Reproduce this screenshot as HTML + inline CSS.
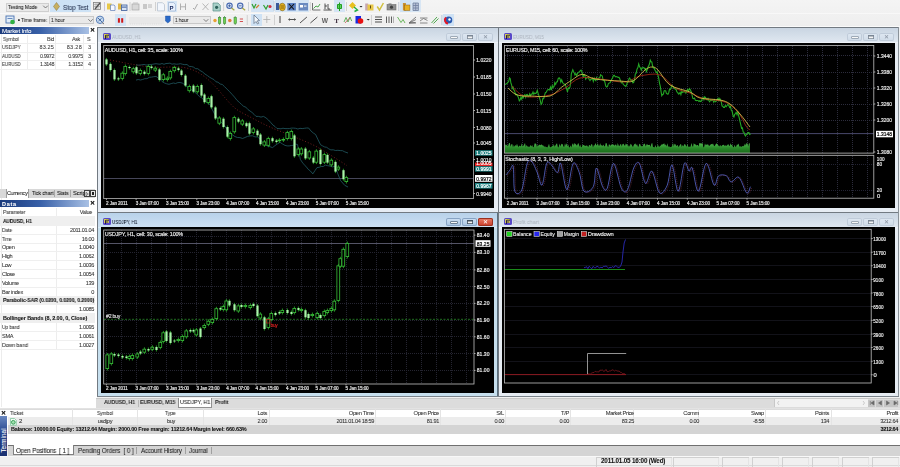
<!DOCTYPE html><html><head><meta charset="utf-8"><style>
html,body{margin:0;padding:0;width:900px;height:467px;overflow:hidden;background:#f0f0f0;font-family:"Liberation Sans", sans-serif;}
.t{position:absolute;white-space:nowrap;color:#303030;-webkit-text-stroke:0.06px currentColor;will-change:transform;}
svg{position:absolute;will-change:transform;}
</style></head><body>
<div style="position:absolute;left:0px;top:0px;width:900px;height:27px;background:linear-gradient(#f4f4f4,#eeeeee);"></div>
<div style="position:absolute;left:0px;top:25.5px;width:900px;height:1px;background:#fafafa;"></div>
<div style="position:absolute;left:0px;top:13px;width:900px;height:1px;background:#f8f8f8;"></div>
<div style="position:absolute;left:6px;top:2.5px;width:43px;height:9px;background:#e9e9e9;box-shadow:inset 0 0 0 1px #cfcfcf;"></div>
<div style="position:absolute;left:50px;top:0px;width:41px;height:12px;background:#cde2f5;"></div>
<div style="position:absolute;left:166.5px;top:1px;width:10px;height:11px;background:#d6e6f6;"></div>
<div style="position:absolute;left:250.5px;top:0px;width:23.5px;height:12px;background:#d4e4f4;"></div>
<div style="position:absolute;left:274.5px;top:0px;width:34px;height:12px;background:#d4e4f4;"></div>
<div style="position:absolute;left:334px;top:0px;width:11px;height:12px;background:#d4e4f4;"></div>
<div style="position:absolute;left:400px;top:0px;width:11px;height:12px;background:#cfe2f4;"></div>
<div style="position:absolute;left:411px;top:0px;width:9.5px;height:12px;background:#d8e6f4;"></div>
<div style="position:absolute;left:49.4px;top:15.6px;width:45px;height:8.6px;background:#e9e9e9;box-shadow:inset 0 0 0 1px #c8c8c8;"></div>
<div style="position:absolute;left:115px;top:14px;width:11px;height:12px;background:#d4e4f4;"></div>
<div style="position:absolute;left:128.6px;top:16.5px;width:35.5px;height:7.5px;background:#e8e8e8;"></div>
<div style="position:absolute;left:173.4px;top:15.6px;width:38px;height:8.6px;background:#e9e9e9;box-shadow:inset 0 0 0 1px #c8c8c8;"></div>
<div style="position:absolute;left:250.5px;top:14px;width:11px;height:12px;background:#cfe2f4;"></div>
<div style="position:absolute;left:443px;top:14px;width:11px;height:12px;background:#cfe2f4;"></div>
<div class="t" style="left:7.50px;top:3.60px;font-size:5.7px;line-height:6.84px;letter-spacing:-0.1px;transform:scaleX(0.896);transform-origin:0 0;color:#202020;">Testing Mode</div>
<div class="t" style="left:62.60px;top:4.16px;font-size:6.8px;line-height:8.16px;letter-spacing:-0.1px;transform:scaleX(0.926);transform-origin:0 0;color:#1e2a48;">Stop Test</div>
<div class="t" style="left:21.30px;top:16.50px;font-size:5.7px;line-height:6.84px;letter-spacing:-0.1px;transform:scaleX(0.904);transform-origin:0 0;color:#202020;">Time frame:</div>
<div class="t" style="left:51.40px;top:16.90px;font-size:5.7px;line-height:6.84px;letter-spacing:-0.1px;transform:scaleX(0.875);transform-origin:0 0;color:#202020;">1 hour</div>
<div class="t" style="left:175.40px;top:16.90px;font-size:5.7px;line-height:6.84px;letter-spacing:-0.1px;transform:scaleX(0.849);transform-origin:0 0;color:#202020;">1 hour</div>
<svg style="left:0;top:0" width="460" height="27" viewBox="0 0 460 27">
<g fill="none" stroke-linecap="round">
<path d="M43.5 6 L45.5 8 L47.5 6" stroke="#606060" stroke-width="0.8"/>
<path d="M88.6 19.5 L90.6 21.5 L92.6 19.5" stroke="#606060" stroke-width="0.8"/>
<path d="M204 19.5 L206 21.5 L208 19.5" stroke="#606060" stroke-width="0.8"/>
</g>
<path d="M56.5 2.5 L59.5 6.5 L56.5 10.5 L53.5 6.5Z" fill="#c8b060" stroke="#807040" stroke-width="0.5"/>
<rect x="93.5" y="2.5" width="7" height="7" fill="#e8e8e8" stroke="#808080" stroke-width="0.8"/>
<path d="M94 4.5 H100 M94 6.5 H100 M96 3 V9 M98 3 V9" stroke="#909090" stroke-width="0.5"/>
<path d="M95 9 L100 3" stroke="#505050" stroke-width="1.2"/>
<rect x="104" y="2" width="0.8" height="9" fill="#c0b8d0"/>
<rect x="107" y="3.5" width="4.5" height="6" fill="#e8c848"/>
<path d="M110.5 5 H114 L115 6 V10.5 H110.5Z" fill="#f8f8ff" stroke="#6080b8" stroke-width="0.7"/>
<rect x="118" y="3.5" width="3.5" height="6" fill="#e0b848"/>
<rect x="121.5" y="5" width="5.5" height="5.5" fill="#d8e4f4" stroke="#3a5a98" stroke-width="0.8"/>
<rect x="122" y="6.6" width="4.5" height="1" fill="#3a5a98"/>
<rect x="129.6" y="2" width="0.8" height="9" fill="#c8c8c8"/>
<rect x="132" y="4" width="7" height="6" fill="#d8d8d8" stroke="#a8a8a8" stroke-width="0.7"/>
<path d="M133 3 H138" stroke="#b0b0b0" stroke-width="0.7"/>
<rect x="143" y="4" width="4" height="5" fill="#c8c8c8"/><path d="M148 5 H152 M148 7 H152" stroke="#a8a8a8" stroke-width="0.8"/>
<rect x="155" y="2" width="0.8" height="9" fill="#c8c8c8"/>
<path d="M157.5 2.7 H162.5 L164.5 4.7 V10.9 H157.5Z" fill="#f2f6fc" stroke="#b0bccc" stroke-width="0.7"/>
<path d="M168.5 2.5 H173.5 L175.5 4.5 V11 H168.5Z" fill="#e8f0fc" stroke="#90a8c8" stroke-width="0.6"/>
<text x="169.6" y="9.6" font-size="6" font-weight="bold" fill="#1a2a60" font-family="Liberation Sans">P</text>
<path d="M180.5 3.5 V10 M185.5 3.5 V10 M180.5 6.8 H185.5" stroke="#a8a8a8" stroke-width="0.9"/>
<path d="M193 8 L194.5 9.5 L197.5 4" stroke="#a0a0a0" stroke-width="0.9" fill="none"/>
<path d="M202.5 3.5 L208.5 10 M208.5 3.5 L202.5 10" stroke="#a8a8a8" stroke-width="0.8"/>
<path d="M213 3 H218 L220.3 5.3 V11 H213Z" fill="#a8d0c8" stroke="#5a9088" stroke-width="0.7"/>
<circle cx="216.6" cy="7.3" r="1.6" fill="#2a6058"/>
<rect x="223.3" y="2" width="0.8" height="9" fill="#c8c8c8"/>
<circle cx="229.5" cy="5.8" r="2.7" fill="#dce8f8" stroke="#4a6ab0" stroke-width="1.1"/>
<path d="M228 5.8 H231 M229.5 4.3 V7.3" stroke="#2a4a90" stroke-width="0.7"/>
<path d="M231.5 8 L234.4 10.3" stroke="#a8a840" stroke-width="1.2"/>
<circle cx="240.2" cy="5.8" r="2.7" fill="#dce8f8" stroke="#4a6ab0" stroke-width="1.1"/>
<path d="M238.7 5.8 H241.7" stroke="#2a4a90" stroke-width="0.7"/>
<path d="M242.2 8 L245.2 10.3" stroke="#a8a840" stroke-width="1.2"/>
<rect x="248.2" y="2" width="0.8" height="9" fill="#c0c8d0"/>
<path d="M252 4 L254 8 L256 4" stroke="#30a030" stroke-width="1.2" fill="none"/><path d="M256 8 L259 5" stroke="#d08030" stroke-width="1.2"/>
<path d="M263.5 5 L266 9 L268 5" stroke="#30a030" stroke-width="1.2" fill="none"/><circle cx="270" cy="6.5" r="1.6" fill="#d03040"/>
<rect x="273.6" y="1" width="0.8" height="10" fill="#b8c8d8"/>
<rect x="276" y="3" width="3" height="7" fill="#3a5a9a"/>
<ellipse cx="282.3" cy="7" rx="3" ry="3.8" fill="#e0b020" stroke="#806010" stroke-width="0.6"/>
<path d="M280.5 6 H284 M280.5 8 H284" stroke="#604000" stroke-width="0.6"/>
<rect x="287.3" y="3" width="8.6" height="7.5" fill="#5a80c0"/>
<path d="M289 4 L294 9.5 M294 4 L289 9.5" stroke="#101010" stroke-width="1.1"/>
<rect x="298.6" y="3" width="9.4" height="7.5" fill="#6a8ac0"/>
<rect x="300" y="5" width="3" height="2.5" fill="#ffffff"/><rect x="304" y="5.5" width="2.5" height="1.2" fill="#e8e8e8"/>
<rect x="309.8" y="2" width="0.8" height="9" fill="#c8c8c8"/>
<path d="M312.5 3 V10 H320.4" stroke="#505050" stroke-width="0.8" fill="none"/><path d="M313.5 8.5 L316 6 L318 7 L320 4" stroke="#40a040" stroke-width="0.9" fill="none"/>
<path d="M323.5 10 H331.7 M325 3.5 V9 M325 6 H327 M328 4 V9 H330" stroke="#404040" stroke-width="0.9" fill="none"/>
<path d="M339.5 2.5 V11 M337.5 4.5 H341.5 V8.5 H337.5Z" stroke="#20a020" stroke-width="1" fill="#60d060"/>
<rect x="346" y="2" width="0.8" height="9" fill="#c8c8c8"/>
<path d="M352.5 2 L356 5.5 L352.5 9 L349 5.5Z" fill="#e8c020"/><path d="M354 7 L357.5 10 L354.5 11.5" stroke="#20b040" stroke-width="1.4" fill="none"/>
<path d="M359.5 6 H362.5 L361 7.5Z" fill="#202020"/>
<rect x="365.2" y="3.5" width="3" height="7" fill="#c8a8b0"/><rect x="367.5" y="4.5" width="6" height="6" fill="#e8c848"/><rect x="370" y="5.5" width="0.9" height="3" fill="#504010"/>
<path d="M377.2 6.5 L379.5 10 L383.4 3" stroke="#d0c040" stroke-width="1.5" fill="none"/>
<rect x="387" y="4.5" width="9" height="5.5" fill="#909090" stroke="#606060" stroke-width="0.5"/><circle cx="391.5" cy="7.2" r="1.6" fill="#404040"/><rect x="388.5" y="3.5" width="3" height="1" fill="#707070"/>
<rect x="398.4" y="2" width="0.8" height="9" fill="#b8c0d0"/>
<rect x="402.9" y="3" width="3" height="7.5" fill="#c89030"/><rect x="404.5" y="5" width="5.4" height="5.5" fill="#e8b020" stroke="#906010" stroke-width="0.5"/>
<path d="M413 3 H418.4 V10.5 H413Z M413 5.5 H418.4 M413 8 H418.4 M415.7 3 V10.5" stroke="#7080a0" stroke-width="0.8" fill="#b8c4d8"/>
<!-- row 2 -->
<rect x="6" y="16" width="8" height="7" fill="#e0ecf8" stroke="#4a72b0" stroke-width="0.9"/>
<path d="M7.5 18.5 H12.5" stroke="#4a72b0" stroke-width="0.8"/>
<circle cx="12.5" cy="22" r="2.3" fill="#30b040"/>
<rect x="18" y="19.3" width="1.8" height="1.6" fill="#202020"/>
<circle cx="100" cy="19.8" r="3.7" fill="#c8dcf0" stroke="#4a72b0" stroke-width="0.9"/>
<path d="M98 18 L102 22 M98.5 21 L101.5 18.5" stroke="#2a5090" stroke-width="0.8"/>
<path d="M102 22.5 L104 24" stroke="#707070" stroke-width="1"/>
<rect x="117.9" y="18.2" width="2" height="4.5" fill="#d01818"/><rect x="121.2" y="18.2" width="2" height="4.5" fill="#d01818"/>
<path d="M130 24 H163" stroke="#c8c8c8" stroke-width="0.6" stroke-dasharray="0.6 1.6"/>
<path d="M165.4 16 H170.3 V21 L167.85 23 L165.4 21Z" fill="#2a6ac8" stroke="#1a4a98" stroke-width="0.4"/>
<circle cx="215" cy="20.5" r="1.7" fill="#e8a030"/>
<path d="M219.5 16 V25 M224.5 16 V25 M235.2 16 V25" stroke="#308030" stroke-width="0.6"/>
<rect x="218.3" y="17.5" width="2.5" height="6" fill="#70d050" stroke="#308030" stroke-width="0.5"/>
<rect x="223.3" y="17.5" width="2.5" height="6" fill="#70d050" stroke="#308030" stroke-width="0.5"/>
<circle cx="229.8" cy="20.5" r="1.8" fill="#e08040"/>
<rect x="234" y="17.5" width="2.5" height="6" fill="#70d050" stroke="#308030" stroke-width="0.5"/>
<path d="M239.8 19 H243 M239.8 21.5 H243" stroke="#d04040" stroke-width="0.9"/>
<rect x="246.8" y="15" width="0.8" height="10" fill="#c8c8c8"/>
<path d="M254 15 V23.5 L256 21.5 L257.5 24 L258.7 23.3 L257.3 20.8 L259.5 20.5Z" fill="#f4f8fc" stroke="#5a6a80" stroke-width="0.7"/>
<path d="M266.8 16 V23 M263.3 19.5 H270.3" stroke="#b0b0b0" stroke-width="0.8"/>
<rect x="274" y="15" width="0.8" height="10" fill="#c8c8c8"/>
<path d="M280 16 V23" stroke="#505050" stroke-width="1.1"/>
<path d="M288.6 19.5 H295.6" stroke="#505050" stroke-width="1"/><path d="M290 18.3 L288.6 19.5 L290 20.7 M294.2 18.3 L295.6 19.5 L294.2 20.7" stroke="#505050" stroke-width="0.7" fill="none"/>
<path d="M300 23 L306.9 17" stroke="#505050" stroke-width="1"/>
<path d="M310.4 23 L317.4 17" stroke="#505050" stroke-width="1"/>
<text x="321.8" y="22.6" font-size="6.6" fill="#606060" font-family="Liberation Sans" font-weight="bold">W</text>
<text x="334.2" y="22.8" font-size="7" fill="#403040" font-family="Liberation Serif" font-weight="bold">T</text>
<path d="M344 22 L346 17.5 L348 22 L350 17 L351.7 21" stroke="#40a040" stroke-width="0.8" fill="none"/><path d="M345 23 L350 17.5" stroke="#c04040" stroke-width="0.7"/>
<rect x="355.5" y="16" width="5.5" height="7.5" fill="#1828e0"/><circle cx="360.5" cy="21" r="2.8" fill="#e81010"/>
<path d="M366.6 19 H369.8 L368.2 20.6Z" fill="#202020"/>
<rect x="371.1" y="15" width="0.8" height="10" fill="#c8c8c8"/>
<path d="M375 17 H382 M375 19.5 H382 M375 22 H382" stroke="#505050" stroke-width="1.1"/>
<path d="M386.5 16.5 V23 M389 16.5 V23 M391.5 16.5 V23" stroke="#606060" stroke-width="1"/><path d="M393.5 16.5 V23" stroke="#b0b0b0" stroke-width="1"/>
<path d="M397.5 17 L401 22.5 L403 19.5 L405 23" stroke="#60b050" stroke-width="0.9" fill="none"/>
<path d="M409 23 L416 17 M409 23 L416 19.5 M409 23 L415.5 22.5 M409 23 H416" stroke="#606060" stroke-width="0.8"/>
<path d="M420 18 H427.5 M420 23 H427.5 M420 21 L423.5 18.5 L427.5 20.5" stroke="#707070" stroke-width="0.8" fill="none"/>
<path d="M431.5 23 L437 17 M433.5 23.5 L438.5 18.5" stroke="#40a040" stroke-width="0.9"/>
<rect x="441.5" y="15" width="0.8" height="10" fill="#a8c0d8"/>
<circle cx="448.7" cy="20" r="3.6" fill="#2a5ab0"/><path d="M446 17.5 A3.5 3.5 0 0 0 448 23.5" stroke="#e01828" stroke-width="2" fill="none"/><circle cx="449.5" cy="19.5" r="1.2" fill="#ffffff"/>
</svg>
<div style="position:absolute;left:0px;top:27px;width:97px;height:381px;background:#ffffff;"></div>
<div style="position:absolute;left:0.5px;top:34px;width:1px;height:373px;background:#ececec;"></div>
<div style="position:absolute;left:0px;top:27px;width:89px;height:7px;background:linear-gradient(to right,#1a3a7c 0%,#3860a8 45%,#a8c0e4 100%);"></div><div class="t" style="left:2.40px;top:27.13px;font-size:6.2px;line-height:7.44px;letter-spacing:-0.161px;color:#ffffff;">Market Info</div><div class="t" style="left:89.50px;top:27.32px;font-size:6px;line-height:7.20px;letter-spacing:0.000px;color:#202020;font-weight:bold;">&#x2715;</div>
<div class="t" style="left:2.60px;top:35.69px;font-size:5.5px;line-height:6.60px;letter-spacing:-0.1px;transform:scaleX(0.886);transform-origin:0 0;color:#404040;">Symbol</div>
<div class="t" style="left:-246.35px;top:35.69px;font-size:5.5px;line-height:6.60px;letter-spacing:-0.350px;width:300px;text-align:right;color:#404040;">Bid</div>
<div class="t" style="left:-219.55px;top:35.69px;font-size:5.5px;line-height:6.60px;letter-spacing:-0.350px;width:300px;text-align:right;color:#404040;">Ask</div>
<div class="t" style="left:87.30px;top:35.69px;font-size:5.5px;line-height:6.60px;letter-spacing:-0.350px;color:#404040;">S</div>
<div style="position:absolute;left:0px;top:52px;width:95px;height:1px;background:#efefef;"></div>
<div class="t" style="left:1.50px;top:43.79px;font-size:5.5px;line-height:6.60px;letter-spacing:-0.1px;transform:scaleX(0.882);transform-origin:0 0;color:#383838;">USDJPY</div>
<div class="t" style="left:-246.36px;top:43.79px;font-size:5.5px;line-height:6.60px;letter-spacing:0.159px;width:300px;text-align:right;color:#383838;">83.25</div>
<div class="t" style="left:-218.11px;top:43.79px;font-size:5.5px;line-height:6.60px;letter-spacing:0.309px;width:300px;text-align:right;color:#383838;">83.28</div>
<div class="t" style="left:87.60px;top:43.79px;font-size:5.5px;line-height:6.60px;letter-spacing:-0.350px;color:#383838;">3</div>
<div style="position:absolute;left:0px;top:60px;width:95px;height:1px;background:#efefef;"></div>
<div class="t" style="left:1.50px;top:52.64px;font-size:5.5px;line-height:6.60px;letter-spacing:-0.1px;transform:scaleX(0.823);transform-origin:0 0;color:#383838;">AUDUSD</div>
<div class="t" style="left:-245.72px;top:52.64px;font-size:5.5px;line-height:6.60px;letter-spacing:-0.485px;width:300px;text-align:right;color:#383838;">0.9972</div>
<div class="t" style="left:-217.44px;top:52.64px;font-size:5.5px;line-height:6.60px;letter-spacing:-0.365px;width:300px;text-align:right;color:#383838;">0.9975</div>
<div class="t" style="left:87.60px;top:52.64px;font-size:5.5px;line-height:6.60px;letter-spacing:-0.350px;color:#383838;">3</div>
<div style="position:absolute;left:0px;top:69px;width:95px;height:1px;background:#efefef;"></div>
<div class="t" style="left:1.50px;top:61.49px;font-size:5.5px;line-height:6.60px;letter-spacing:-0.1px;transform:scaleX(0.823);transform-origin:0 0;color:#383838;">EURUSD</div>
<div class="t" style="left:-245.72px;top:61.49px;font-size:5.5px;line-height:6.60px;letter-spacing:-0.485px;width:300px;text-align:right;color:#383838;">1.3148</div>
<div class="t" style="left:-217.44px;top:61.49px;font-size:5.5px;line-height:6.60px;letter-spacing:-0.365px;width:300px;text-align:right;color:#383838;">1.3152</div>
<div class="t" style="left:87.60px;top:61.49px;font-size:5.5px;line-height:6.60px;letter-spacing:-0.350px;color:#383838;">4</div>
<div style="position:absolute;left:27px;top:35px;width:1px;height:34px;background:#ededed;"></div>
<div style="position:absolute;left:55px;top:35px;width:1px;height:34px;background:#ededed;"></div>
<div style="position:absolute;left:83px;top:35px;width:1px;height:34px;background:#ededed;"></div>
<div style="position:absolute;left:0px;top:42.5px;width:95px;height:1px;background:#eeeeee;"></div>
<div style="position:absolute;left:0px;top:189px;width:95px;height:9px;background:#d8d8d8;"></div>
<div style="position:absolute;left:6px;top:189px;width:23px;height:9px;background:#ffffff;box-shadow:inset 1px 0 0 #a0a0a0,inset -1px 0 0 #a0a0a0;"></div>
<div class="t" style="left:6.70px;top:190.01px;font-size:5.8px;line-height:6.96px;letter-spacing:-0.1px;transform:scaleX(0.911);transform-origin:0 0;color:#101010;">Currency</div>
<div class="t" style="left:31.70px;top:190.01px;font-size:5.8px;line-height:6.96px;letter-spacing:-0.1px;transform:scaleX(0.895);transform-origin:0 0;color:#101010;">Tick chart</div>
<div style="position:absolute;left:54px;top:190px;width:1px;height:7px;background:#a8a8a8;"></div>
<div class="t" style="left:57.20px;top:190.01px;font-size:5.8px;line-height:6.96px;letter-spacing:-0.1px;transform:scaleX(0.897);transform-origin:0 0;color:#101010;">Stats</div>
<div style="position:absolute;left:70px;top:190px;width:1px;height:7px;background:#a8a8a8;"></div>
<div class="t" style="left:72.70px;top:190.01px;font-size:5.8px;line-height:6.96px;letter-spacing:-0.121px;color:#101010;">Scripts</div>
<div style="position:absolute;left:84px;top:190px;width:5.5px;height:6.5px;background:#e8e8e8;box-shadow:inset 0 0 0 1px #404040;"></div>
<svg style="left:85px;top:191.5px" width="4" height="4"><path d="M1 0.3 L3.3 2 L1 3.7Z" fill="none" stroke="#404040" stroke-width="0.6"/></svg>
<div style="position:absolute;left:89.5px;top:190px;width:6px;height:6.5px;background:#e8e8e8;box-shadow:inset 0 0 0 1px #404040;"></div>
<div style="position:absolute;left:91.5px;top:192px;width:2px;height:2.5px;background:#202020;"></div>
<div style="position:absolute;left:0px;top:200px;width:89px;height:7px;background:linear-gradient(to right,#1a3a7c 0%,#3860a8 45%,#a8c0e4 100%);"></div><div class="t" style="left:2.20px;top:200.59px;font-size:5.5px;line-height:6.60px;letter-spacing:0.693px;color:#ffffff;font-weight:bold;">Data</div><div class="t" style="left:89.50px;top:200.32px;font-size:6px;line-height:7.20px;letter-spacing:0.000px;color:#202020;font-weight:bold;">&#x2715;</div>
<div class="t" style="left:2.60px;top:209.10px;font-size:5.6px;line-height:6.72px;letter-spacing:-0.1px;transform:scaleX(0.884);transform-origin:0 0;color:#303030;">Parameter</div>
<div class="t" style="left:-207.85px;top:209.10px;font-size:5.6px;line-height:6.72px;letter-spacing:-0.350px;width:300px;text-align:right;color:#303030;">Value</div>
<div style="position:absolute;left:56px;top:208px;width:1px;height:9px;background:#ededed;"></div>
<div style="position:absolute;left:0px;top:216px;width:95px;height:1px;background:#efefef;"></div>
<div style="position:absolute;left:0px;top:217px;width:95px;height:9px;background:#efefef;"></div>
<div class="t" style="left:2.60px;top:218.02px;font-size:5.5px;line-height:6.60px;letter-spacing:-0.1px;transform:scaleX(0.883);transform-origin:0 0;color:#101010;font-weight:bold;">AUDUSD, H1</div>
<div style="position:absolute;left:0px;top:225px;width:95px;height:1px;background:#efefef;"></div>
<div class="t" style="left:1.50px;top:226.76px;font-size:5.6px;line-height:6.72px;letter-spacing:-0.1px;transform:scaleX(0.867);transform-origin:0 0;color:#303030;">Date</div>
<div class="t" style="left:-206.05px;top:226.76px;font-size:5.6px;line-height:6.72px;letter-spacing:-0.350px;width:300px;text-align:right;color:#303030;">2011.01.04</div>
<div style="position:absolute;left:56px;top:226px;width:1px;height:9px;background:#ededed;"></div>
<div style="position:absolute;left:0px;top:234px;width:95px;height:1px;background:#efefef;"></div>
<div class="t" style="left:1.50px;top:235.59px;font-size:5.6px;line-height:6.72px;letter-spacing:-0.1px;transform:scaleX(0.813);transform-origin:0 0;color:#303030;">Time</div>
<div class="t" style="left:-206.05px;top:235.59px;font-size:5.6px;line-height:6.72px;letter-spacing:-0.350px;width:300px;text-align:right;color:#303030;">16:00</div>
<div style="position:absolute;left:56px;top:235px;width:1px;height:9px;background:#ededed;"></div>
<div style="position:absolute;left:0px;top:243px;width:95px;height:1px;background:#efefef;"></div>
<div class="t" style="left:1.80px;top:244.42px;font-size:5.6px;line-height:6.72px;letter-spacing:-0.300px;color:#303030;">Open</div>
<div class="t" style="left:-206.05px;top:244.42px;font-size:5.6px;line-height:6.72px;letter-spacing:-0.350px;width:300px;text-align:right;color:#303030;">1.0040</div>
<div style="position:absolute;left:56px;top:243px;width:1px;height:9px;background:#ededed;"></div>
<div style="position:absolute;left:0px;top:251px;width:95px;height:1px;background:#efefef;"></div>
<div class="t" style="left:1.80px;top:253.25px;font-size:5.6px;line-height:6.72px;letter-spacing:-0.300px;color:#303030;">High</div>
<div class="t" style="left:-206.05px;top:253.25px;font-size:5.6px;line-height:6.72px;letter-spacing:-0.350px;width:300px;text-align:right;color:#303030;">1.0062</div>
<div style="position:absolute;left:56px;top:252px;width:1px;height:9px;background:#ededed;"></div>
<div style="position:absolute;left:0px;top:260px;width:95px;height:1px;background:#efefef;"></div>
<div class="t" style="left:1.80px;top:262.08px;font-size:5.6px;line-height:6.72px;letter-spacing:-0.300px;color:#303030;">Low</div>
<div class="t" style="left:-206.05px;top:262.08px;font-size:5.6px;line-height:6.72px;letter-spacing:-0.350px;width:300px;text-align:right;color:#303030;">1.0036</div>
<div style="position:absolute;left:56px;top:261px;width:1px;height:9px;background:#ededed;"></div>
<div style="position:absolute;left:0px;top:269px;width:95px;height:1px;background:#efefef;"></div>
<div class="t" style="left:1.80px;top:270.91px;font-size:5.6px;line-height:6.72px;letter-spacing:-0.300px;color:#303030;">Close</div>
<div class="t" style="left:-206.05px;top:270.91px;font-size:5.6px;line-height:6.72px;letter-spacing:-0.350px;width:300px;text-align:right;color:#303030;">1.0054</div>
<div style="position:absolute;left:56px;top:270px;width:1px;height:9px;background:#ededed;"></div>
<div style="position:absolute;left:0px;top:278px;width:95px;height:1px;background:#efefef;"></div>
<div class="t" style="left:1.80px;top:279.74px;font-size:5.6px;line-height:6.72px;letter-spacing:-0.300px;color:#303030;">Volume</div>
<div class="t" style="left:-206.05px;top:279.74px;font-size:5.6px;line-height:6.72px;letter-spacing:-0.350px;width:300px;text-align:right;color:#303030;">139</div>
<div style="position:absolute;left:56px;top:279px;width:1px;height:9px;background:#ededed;"></div>
<div style="position:absolute;left:0px;top:287px;width:95px;height:1px;background:#efefef;"></div>
<div class="t" style="left:1.80px;top:288.57px;font-size:5.6px;line-height:6.72px;letter-spacing:-0.300px;color:#303030;">Bar index</div>
<div class="t" style="left:-206.05px;top:288.57px;font-size:5.6px;line-height:6.72px;letter-spacing:-0.350px;width:300px;text-align:right;color:#303030;">0</div>
<div style="position:absolute;left:56px;top:288px;width:1px;height:9px;background:#ededed;"></div>
<div style="position:absolute;left:0px;top:296px;width:95px;height:1px;background:#efefef;"></div>
<div style="position:absolute;left:0px;top:296px;width:95px;height:9px;background:#efefef;"></div>
<div class="t" style="left:2.60px;top:297.49px;font-size:5.5px;line-height:6.60px;letter-spacing:-0.1px;transform:scaleX(0.948);transform-origin:0 0;color:#101010;font-weight:bold;">Parabolic-SAR (0.0200, 0.0200, 0.2000)</div>
<div style="position:absolute;left:0px;top:304px;width:95px;height:1px;background:#efefef;"></div>
<div class="t" style="left:1.80px;top:306.23px;font-size:5.6px;line-height:6.72px;letter-spacing:-0.300px;color:#303030;"></div>
<div class="t" style="left:-206.05px;top:306.23px;font-size:5.6px;line-height:6.72px;letter-spacing:-0.350px;width:300px;text-align:right;color:#303030;">1.0085</div>
<div style="position:absolute;left:56px;top:305px;width:1px;height:9px;background:#ededed;"></div>
<div style="position:absolute;left:0px;top:313px;width:95px;height:1px;background:#efefef;"></div>
<div style="position:absolute;left:0px;top:314px;width:95px;height:9px;background:#efefef;"></div>
<div class="t" style="left:2.60px;top:315.15px;font-size:5.5px;line-height:6.60px;letter-spacing:-0.119px;color:#101010;font-weight:bold;">Bollinger Bands (8, 2.00, 0, Close)</div>
<div style="position:absolute;left:0px;top:322px;width:95px;height:1px;background:#efefef;"></div>
<div class="t" style="left:1.50px;top:323.89px;font-size:5.6px;line-height:6.72px;letter-spacing:-0.1px;transform:scaleX(0.855);transform-origin:0 0;color:#303030;">Up band</div>
<div class="t" style="left:-206.05px;top:323.89px;font-size:5.6px;line-height:6.72px;letter-spacing:-0.350px;width:300px;text-align:right;color:#303030;">1.0095</div>
<div style="position:absolute;left:56px;top:323px;width:1px;height:9px;background:#ededed;"></div>
<div style="position:absolute;left:0px;top:331px;width:95px;height:1px;background:#efefef;"></div>
<div class="t" style="left:1.80px;top:332.72px;font-size:5.6px;line-height:6.72px;letter-spacing:-0.300px;color:#303030;">SMA</div>
<div class="t" style="left:-206.05px;top:332.72px;font-size:5.6px;line-height:6.72px;letter-spacing:-0.350px;width:300px;text-align:right;color:#303030;">1.0061</div>
<div style="position:absolute;left:56px;top:332px;width:1px;height:9px;background:#ededed;"></div>
<div style="position:absolute;left:0px;top:340px;width:95px;height:1px;background:#efefef;"></div>
<div class="t" style="left:1.50px;top:341.55px;font-size:5.6px;line-height:6.72px;letter-spacing:-0.1px;transform:scaleX(0.941);transform-origin:0 0;color:#303030;">Down band</div>
<div class="t" style="left:-206.05px;top:341.55px;font-size:5.6px;line-height:6.72px;letter-spacing:-0.350px;width:300px;text-align:right;color:#303030;">1.0027</div>
<div style="position:absolute;left:56px;top:341px;width:1px;height:9px;background:#ededed;"></div>
<div style="position:absolute;left:0px;top:349px;width:95px;height:1px;background:#efefef;"></div>
<div style="position:absolute;left:97px;top:27px;width:803px;height:371px;background:#727a82;"></div>
<div style="position:absolute;left:98px;top:28px;width:400px;height:184px;background:#e6ecf3;"></div><div style="position:absolute;left:98px;top:28px;width:400px;height:14px;background:linear-gradient(#c9d5e2,#dfe7f0);"></div><div style="position:absolute;left:98px;top:42px;width:400px;height:1px;background:#eef2f8;"></div><svg style="left:102.5px;top:32.5px" width="8" height="7"><rect x="0" y="0" width="8" height="7" rx="1.5" fill="#5848c8"/><rect x="1.2" y="1" width="4.5" height="4" fill="#f0e848"/><path d="M2.5 2.2 H6 M2.5 2.2 V6 M2.5 4 H5" stroke="#181040" stroke-width="0.9"/></svg><div class="t" style="left:111.70px;top:32.73px;font-size:6.1px;line-height:7.32px;letter-spacing:-0.1px;transform:scaleX(0.805);transform-origin:0 0;color:#b0b8c2;">AUDUSD, H1</div><div style="position:absolute;left:446.0px;top:32.5px;width:14.5px;height:8px;background:linear-gradient(#dfe8f2,#cfdbe8);border-radius:2px;box-shadow:inset 0 0 0 1px #c0ccda;"></div><div style="position:absolute;left:462.0px;top:32.5px;width:14.5px;height:8px;background:linear-gradient(#dfe8f2,#cfdbe8);border-radius:2px;box-shadow:inset 0 0 0 1px #c0ccda;"></div><div style="position:absolute;left:478.0px;top:32.5px;width:14.5px;height:8px;background:linear-gradient(#dfe8f2,#cfdbe8);border-radius:2px;box-shadow:inset 0 0 0 1px #c0ccda;"></div><div style="position:absolute;left:451.0px;top:36.8px;width:5.5px;height:1.6px;background:#f8f8f8;box-shadow:0 0 0 0.6px #7a8694;"></div><div style="position:absolute;left:467.0px;top:34.8px;width:5.5px;height:4.5px;box-shadow:inset 0 0 0 0.8px #7a8694,inset 0 1.5px 0 #7a8694;background:#f4f4f4;"></div><div class="t" style="left:483.10px;top:33.59px;font-size:5.5px;line-height:6.60px;letter-spacing:0.000px;color:#8a94a2;">&#x2715;</div>
<div style="position:absolute;left:499px;top:28px;width:401px;height:184px;background:#e6ecf3;"></div><div style="position:absolute;left:499px;top:28px;width:401px;height:14px;background:linear-gradient(#c9d5e2,#dfe7f0);"></div><div style="position:absolute;left:499px;top:42px;width:401px;height:1px;background:#eef2f8;"></div><svg style="left:503.5px;top:32.5px" width="8" height="7"><rect x="0" y="0" width="8" height="7" rx="1.5" fill="#5848c8"/><rect x="1.2" y="1" width="4.5" height="4" fill="#f0e848"/><path d="M2.5 2.2 H6 M2.5 2.2 V6 M2.5 4 H5" stroke="#181040" stroke-width="0.9"/></svg><div class="t" style="left:512.70px;top:32.73px;font-size:6.1px;line-height:7.32px;letter-spacing:-0.1px;transform:scaleX(0.775);transform-origin:0 0;color:#b0b8c2;">EURUSD, M15</div><div style="position:absolute;left:847.0px;top:32.5px;width:14.5px;height:8px;background:linear-gradient(#dfe8f2,#cfdbe8);border-radius:2px;box-shadow:inset 0 0 0 1px #c0ccda;"></div><div style="position:absolute;left:863.0px;top:32.5px;width:14.5px;height:8px;background:linear-gradient(#dfe8f2,#cfdbe8);border-radius:2px;box-shadow:inset 0 0 0 1px #c0ccda;"></div><div style="position:absolute;left:879.0px;top:32.5px;width:14.5px;height:8px;background:linear-gradient(#dfe8f2,#cfdbe8);border-radius:2px;box-shadow:inset 0 0 0 1px #c0ccda;"></div><div style="position:absolute;left:852.0px;top:36.8px;width:5.5px;height:1.6px;background:#f8f8f8;box-shadow:0 0 0 0.6px #7a8694;"></div><div style="position:absolute;left:868.0px;top:34.8px;width:5.5px;height:4.5px;box-shadow:inset 0 0 0 0.8px #7a8694,inset 0 1.5px 0 #7a8694;background:#f4f4f4;"></div><div class="t" style="left:884.10px;top:33.59px;font-size:5.5px;line-height:6.60px;letter-spacing:0.000px;color:#8a94a2;">&#x2715;</div>
<div style="position:absolute;left:98px;top:213px;width:400px;height:185px;background:#c6dfee;"></div><div style="position:absolute;left:496.5px;top:213px;width:1.5px;height:185px;background:#5a7080;"></div><div style="position:absolute;left:98px;top:396.5px;width:400px;height:1.5px;background:#5a7080;"></div><div style="position:absolute;left:98px;top:213px;width:398.5px;height:14px;background:linear-gradient(#b8d2ea,#cde0f2);"></div><div style="position:absolute;left:98px;top:227px;width:398.5px;height:1px;background:#d8eaf6;"></div><svg style="left:102.5px;top:217.5px" width="8" height="7"><rect x="0" y="0" width="8" height="7" rx="1.5" fill="#5848c8"/><rect x="1.2" y="1" width="4.5" height="4" fill="#f0e848"/><path d="M2.5 2.2 H6 M2.5 2.2 V6 M2.5 4 H5" stroke="#181040" stroke-width="0.9"/></svg><div class="t" style="left:111.70px;top:217.73px;font-size:6.1px;line-height:7.32px;letter-spacing:-0.1px;transform:scaleX(0.754);transform-origin:0 0;color:#101828;">USDJPY, H1</div><div style="position:absolute;left:446.0px;top:217.5px;width:14.5px;height:8px;background:linear-gradient(#d0e2f4,#a8c4e2);border-radius:2px;box-shadow:inset 0 0 0 1px #88a4c4;"></div><div style="position:absolute;left:462.0px;top:217.5px;width:14.5px;height:8px;background:linear-gradient(#d0e2f4,#a8c4e2);border-radius:2px;box-shadow:inset 0 0 0 1px #88a4c4;"></div><div style="position:absolute;left:478.0px;top:217.5px;width:14.5px;height:8px;background:linear-gradient(#e8806a,#c83a28);border-radius:2px;box-shadow:inset 0 0 0 1px #9a3020;"></div><div style="position:absolute;left:451.0px;top:221.8px;width:5.5px;height:1.6px;background:#f8f8f8;box-shadow:0 0 0 0.6px #405060;"></div><div style="position:absolute;left:467.0px;top:219.8px;width:5.5px;height:4.5px;box-shadow:inset 0 0 0 0.8px #405060,inset 0 1.5px 0 #405060;background:#f4f4f4;"></div><div class="t" style="left:483.10px;top:218.59px;font-size:5.5px;line-height:6.60px;letter-spacing:0.000px;color:#ffffff;">&#x2715;</div>
<div style="position:absolute;left:499px;top:213px;width:401px;height:185px;background:#e6ecf3;"></div><div style="position:absolute;left:499px;top:213px;width:401px;height:14px;background:linear-gradient(#c9d5e2,#dfe7f0);"></div><div style="position:absolute;left:499px;top:227px;width:401px;height:1px;background:#eef2f8;"></div><svg style="left:503.5px;top:217.5px" width="8" height="7"><rect x="0" y="0" width="8" height="7" rx="1.5" fill="#5848c8"/><rect x="1.2" y="1" width="4.5" height="4" fill="#f0e848"/><path d="M2.5 2.2 H6 M2.5 2.2 V6 M2.5 4 H5" stroke="#181040" stroke-width="0.9"/></svg><div class="t" style="left:512.70px;top:217.73px;font-size:6.1px;line-height:7.32px;letter-spacing:-0.1px;transform:scaleX(0.916);transform-origin:0 0;color:#b0b8c2;">Profit chart</div><div style="position:absolute;left:847.0px;top:217.5px;width:14.5px;height:8px;background:linear-gradient(#dfe8f2,#cfdbe8);border-radius:2px;box-shadow:inset 0 0 0 1px #c0ccda;"></div><div style="position:absolute;left:863.0px;top:217.5px;width:14.5px;height:8px;background:linear-gradient(#dfe8f2,#cfdbe8);border-radius:2px;box-shadow:inset 0 0 0 1px #c0ccda;"></div><div style="position:absolute;left:879.0px;top:217.5px;width:14.5px;height:8px;background:linear-gradient(#dfe8f2,#cfdbe8);border-radius:2px;box-shadow:inset 0 0 0 1px #c0ccda;"></div><div style="position:absolute;left:852.0px;top:221.8px;width:5.5px;height:1.6px;background:#f8f8f8;box-shadow:0 0 0 0.6px #7a8694;"></div><div style="position:absolute;left:868.0px;top:219.8px;width:5.5px;height:4.5px;box-shadow:inset 0 0 0 0.8px #7a8694,inset 0 1.5px 0 #7a8694;background:#f4f4f4;"></div><div class="t" style="left:884.10px;top:218.59px;font-size:5.5px;line-height:6.60px;letter-spacing:0.000px;color:#8a94a2;">&#x2715;</div>
<div style="position:absolute;left:97px;top:212px;width:803px;height:1px;background:#727a82;"></div>
<div style="position:absolute;left:498px;top:27px;width:1px;height:371px;background:#727a82;"></div>
<div style="position:absolute;left:898px;top:27px;width:1px;height:371px;background:#8a9299;"></div>
<div style="position:absolute;left:97px;top:396px;width:802px;height:1px;background:#7a838b;"></div>
<div style="position:absolute;left:97px;top:397px;width:803px;height:1px;background:#f2f2f2;"></div>
<div style="position:absolute;left:899px;top:27px;width:1px;height:371px;background:#eef0f2;"></div>
<div style="position:absolute;left:101px;top:43px;width:393px;height:165px;background:#000000;"></div>
<div style="position:absolute;left:502px;top:43px;width:393px;height:165px;background:#000000;"></div>
<div style="position:absolute;left:101px;top:227px;width:393px;height:166px;background:#000000;"></div>
<div style="position:absolute;left:502px;top:227px;width:393px;height:166px;background:#000000;"></div>
<svg style="left:101px;top:43px" width="394" height="165" viewBox="101 43 394 165"><line x1="104" y1="178.5" x2="473.5" y2="178.5" stroke="#585870" stroke-width="0.8"/><path d="M136.0 64.6 L138.0 65.2 L140.0 65.0 L142.0 64.8 L144.0 64.4 L146.0 65.0 L148.0 64.9 L150.0 64.5 L152.0 64.4 L154.0 64.0 L156.0 63.7 L158.0 64.0 L160.0 64.2 L162.0 63.5 L164.0 64.3 L166.0 63.5 L168.0 63.4 L170.0 63.1 L172.0 64.2 L174.0 63.8 L176.2 64.2 L178.3 64.1 L180.5 63.7 L182.7 64.3 L184.8 64.7 L187.0 64.5 L189.2 66.4 L191.3 66.5 L193.5 67.1 L195.7 68.7 L197.8 68.7 L200.0 70.5 L202.5 71.9 L205.0 74.1 L207.3 75.5 L209.7 77.3 L212.0 78.6 L214.0 79.6 L216.0 81.8 L218.0 82.2 L220.2 84.0 L222.3 84.5 L224.5 86.6 L227.0 89.1 L229.5 91.6 L232.0 94.3 L234.5 97.1 L237.0 100.3 L239.5 102.5 L241.6 104.5 L243.7 106.4 L245.8 107.1 L247.9 109.5 L250.0 111.0 L252.0 112.4 L254.0 114.3 L256.0 116.4 L258.5 116.4 L261.0 117.1 L263.5 116.4 L266.0 117.9 L268.5 120.0 L271.0 122.8 L273.0 125.1 L275.0 126.5 L277.0 128.5 L279.0 128.6 L281.0 128.8 L283.0 128.2 L285.0 128.6 L287.1 128.6 L289.3 128.6 L291.4 128.1 L293.6 128.1 L295.7 128.3 L297.9 129.0 L300.0 128.3 L302.2 128.6 L304.3 128.3 L306.5 128.0 L308.6 128.0 L310.9 130.9 L313.3 133.0 L315.6 134.5 L318.1 139.8 L320.5 144.7 L322.6 145.9 L324.7 147.0 L326.7 147.3 L328.8 148.9 L330.9 149.9 L333.2 149.8 L335.5 150.5 L337.9 150.3 L340.2 150.6 L342.5 150.7 L344.8 151.9 L348.0 153.0" fill="none" stroke="#24606a" stroke-width="0.75"/><path d="M136.0 80.1 L138.2 79.5 L140.4 80.0 L142.6 79.5 L144.8 78.7 L147.0 78.7 L149.2 77.3 L151.5 77.1 L153.8 76.7 L156.0 76.4 L158.0 77.8 L160.0 79.5 L162.0 81.5 L164.3 82.9 L166.7 83.8 L169.0 84.3 L171.2 83.6 L173.4 83.0 L175.6 83.5 L177.8 82.6 L180.0 82.5 L182.2 83.0 L184.4 84.5 L186.6 86.6 L188.8 87.9 L191.0 89.4 L193.1 90.8 L195.2 92.5 L197.4 94.5 L199.5 96.6 L201.6 97.8 L203.7 99.8 L205.8 101.2 L207.9 103.6 L210.0 104.4 L212.3 109.6 L214.7 114.2 L217.0 117.4 L219.4 120.4 L221.9 122.8 L224.3 125.4 L227.2 129.6 L230.0 133.7 L232.5 134.9 L235.0 136.6 L237.5 137.5 L240.0 137.6 L242.5 138.5 L245.0 137.5 L247.5 136.4 L250.0 135.9 L252.5 135.8 L255.0 136.9 L257.5 136.9 L260.0 139.0 L262.5 142.3 L265.0 144.8 L267.5 146.0 L270.0 146.7 L272.5 147.6 L275.0 145.6 L277.5 143.9 L280.0 142.3 L282.5 144.0 L285.0 145.4 L287.1 145.9 L289.2 145.9 L291.2 145.5 L293.3 145.3 L295.4 144.1 L297.5 144.5 L300.3 159.3 L303.1 163.6 L305.9 166.3 L308.2 169.3 L310.5 171.1 L312.8 173.9 L314.9 170.7 L317.0 167.6 L319.1 167.3 L321.1 166.5 L323.2 166.5 L325.3 165.1 L327.7 165.7 L330.1 166.1 L332.6 166.9 L335.0 166.2 L337.8 173.8 L340.6 180.6 L342.7 183.0 L344.8 185.4 L348.0 187.0" fill="none" stroke="#24606a" stroke-width="0.75"/><path d="M110.0 60.0 L117.4 61.4 L127.9 63.5 L139.6 65.6 L150.0 67.0 L159.1 67.4 L167.8 67.1 L175.9 66.9 L183.0 67.3 L188.8 68.5 L193.5 70.2 L197.6 72.2 L201.6 74.6 L205.4 77.2 L208.8 80.1 L212.2 83.5 L216.0 87.3 L220.2 92.0 L224.7 97.5 L229.4 102.8 L234.0 107.4 L238.6 110.8 L243.3 113.5 L248.0 115.9 L252.6 118.3 L257.2 120.7 L261.7 123.1 L266.3 125.3 L270.8 127.4 L275.2 129.3 L279.4 130.9 L283.9 132.7 L289.0 134.7 L295.0 137.2 L301.8 139.9 L308.5 142.8 L314.5 145.6 L319.7 148.4 L324.3 151.2 L328.6 153.9 L332.7 156.5 L336.9 159.1 L341.0 161.7 L344.5 164.0 L347.0 165.6" fill="none" stroke="#7a2020" stroke-width="0.9" stroke-dasharray="1 2"/><rect x="105.9" y="57.9" width="0.9" height="8.0" fill="#28a028"/><rect x="105.4" y="59.4" width="2.2" height="5.0" fill="#a8f4a8"/><rect x="109.9" y="62.4" width="0.9" height="9.1" fill="#28a028"/><rect x="109.4" y="63.9" width="2.2" height="6.1" fill="#a8f4a8"/><rect x="113.9" y="68.5" width="0.9" height="12.4" fill="#28a028"/><rect x="113.4" y="70.0" width="2.2" height="9.4" fill="#a8f4a8"/><rect x="117.9" y="76.8" width="0.9" height="4.1" fill="#28a028"/><rect x="117.4" y="78.3" width="2.2" height="1.1" fill="#a8f4a8"/><rect x="121.9" y="71.3" width="0.9" height="9.1" fill="#28a028"/><rect x="120.9" y="73.2" width="2.8" height="5.3" fill="#000" stroke="#38c038" stroke-width="0.8"/><rect x="124.9" y="64.5" width="0.9" height="11.0" fill="#28a028"/><rect x="123.9" y="66.4" width="2.8" height="7.2" fill="#000" stroke="#38c038" stroke-width="0.8"/><rect x="128.9" y="65.5" width="0.9" height="4.0" fill="#28a028"/><rect x="128.4" y="67.0" width="2.2" height="1.0" fill="#a8f4a8"/><rect x="132.9" y="66.8" width="0.9" height="6.9" fill="#28a028"/><rect x="131.9" y="68.7" width="2.8" height="3.1" fill="#000" stroke="#38c038" stroke-width="0.8"/><rect x="135.9" y="65.7" width="0.9" height="9.1" fill="#28a028"/><rect x="135.4" y="67.2" width="2.2" height="6.1" fill="#a8f4a8"/><rect x="139.9" y="68.5" width="0.9" height="6.9" fill="#28a028"/><rect x="138.9" y="70.4" width="2.8" height="3.1" fill="#000" stroke="#38c038" stroke-width="0.8"/><rect x="143.9" y="70.2" width="0.9" height="5.2" fill="#28a028"/><rect x="143.4" y="71.7" width="2.2" height="2.2" fill="#a8f4a8"/><rect x="147.9" y="64.5" width="0.9" height="10.9" fill="#28a028"/><rect x="146.9" y="66.4" width="2.8" height="7.1" fill="#000" stroke="#38c038" stroke-width="0.8"/><rect x="150.9" y="65.0" width="0.9" height="4.5" fill="#28a028"/><rect x="150.4" y="66.5" width="2.2" height="1.5" fill="#a8f4a8"/><rect x="154.9" y="66.3" width="0.9" height="5.7" fill="#28a028"/><rect x="153.9" y="68.2" width="2.8" height="1.9" fill="#000" stroke="#38c038" stroke-width="0.8"/><rect x="158.9" y="67.9" width="0.9" height="13.6" fill="#28a028"/><rect x="158.4" y="69.4" width="2.2" height="10.6" fill="#a8f4a8"/><rect x="162.9" y="72.9" width="0.9" height="8.6" fill="#28a028"/><rect x="161.9" y="74.8" width="2.8" height="4.8" fill="#000" stroke="#38c038" stroke-width="0.8"/><rect x="166.9" y="76.3" width="0.9" height="5.2" fill="#28a028"/><rect x="165.9" y="78.2" width="2.8" height="1.4" fill="#000" stroke="#38c038" stroke-width="0.8"/><rect x="169.9" y="69.6" width="0.9" height="10.2" fill="#28a028"/><rect x="168.9" y="71.5" width="2.8" height="6.4" fill="#000" stroke="#38c038" stroke-width="0.8"/><rect x="173.9" y="65.7" width="0.9" height="6.9" fill="#28a028"/><rect x="172.9" y="67.6" width="2.8" height="3.1" fill="#000" stroke="#38c038" stroke-width="0.8"/><rect x="177.9" y="66.8" width="0.9" height="4.7" fill="#28a028"/><rect x="177.4" y="68.3" width="2.2" height="1.7" fill="#a8f4a8"/><rect x="180.9" y="69.0" width="0.9" height="7.5" fill="#28a028"/><rect x="180.4" y="70.5" width="2.2" height="4.5" fill="#a8f4a8"/><rect x="184.9" y="74.1" width="0.9" height="13.0" fill="#28a028"/><rect x="184.4" y="75.6" width="2.2" height="10.0" fill="#a8f4a8"/><rect x="188.9" y="84.6" width="0.9" height="8.0" fill="#28a028"/><rect x="187.9" y="86.5" width="2.8" height="4.2" fill="#000" stroke="#38c038" stroke-width="0.8"/><rect x="192.9" y="84.1" width="0.9" height="9.1" fill="#28a028"/><rect x="192.4" y="85.6" width="2.2" height="6.1" fill="#a8f4a8"/><rect x="196.9" y="84.6" width="0.9" height="9.1" fill="#28a028"/><rect x="195.9" y="86.5" width="2.8" height="5.3" fill="#000" stroke="#38c038" stroke-width="0.8"/><rect x="200.9" y="83.5" width="0.9" height="13.6" fill="#28a028"/><rect x="200.4" y="85.0" width="2.2" height="10.6" fill="#a8f4a8"/><rect x="203.9" y="93.0" width="0.9" height="10.7" fill="#28a028"/><rect x="203.4" y="94.5" width="2.2" height="7.7" fill="#a8f4a8"/><rect x="207.9" y="96.5" width="0.9" height="8.0" fill="#28a028"/><rect x="206.9" y="98.4" width="2.8" height="4.2" fill="#000" stroke="#38c038" stroke-width="0.8"/><rect x="210.9" y="94.7" width="0.9" height="14.2" fill="#28a028"/><rect x="210.4" y="96.2" width="2.2" height="11.2" fill="#a8f4a8"/><rect x="214.9" y="105.9" width="0.9" height="14.1" fill="#28a028"/><rect x="214.4" y="107.4" width="2.2" height="11.1" fill="#a8f4a8"/><rect x="218.9" y="116.1" width="0.9" height="9.0" fill="#28a028"/><rect x="217.9" y="118.0" width="2.8" height="5.2" fill="#000" stroke="#38c038" stroke-width="0.8"/><rect x="222.9" y="117.2" width="0.9" height="11.3" fill="#28a028"/><rect x="222.4" y="118.7" width="2.2" height="8.3" fill="#a8f4a8"/><rect x="226.9" y="125.5" width="0.9" height="12.7" fill="#28a028"/><rect x="226.4" y="127.0" width="2.2" height="9.7" fill="#a8f4a8"/><rect x="229.9" y="131.5" width="0.9" height="9.0" fill="#28a028"/><rect x="228.9" y="133.4" width="2.8" height="5.2" fill="#000" stroke="#38c038" stroke-width="0.8"/><rect x="233.9" y="115.7" width="0.9" height="18.0" fill="#28a028"/><rect x="232.9" y="117.6" width="2.8" height="14.2" fill="#000" stroke="#38c038" stroke-width="0.8"/><rect x="237.9" y="117.2" width="0.9" height="6.0" fill="#28a028"/><rect x="237.4" y="118.7" width="2.2" height="3.0" fill="#a8f4a8"/><rect x="241.9" y="119.0" width="0.9" height="7.0" fill="#28a028"/><rect x="240.9" y="120.9" width="2.8" height="3.2" fill="#000" stroke="#38c038" stroke-width="0.8"/><rect x="245.9" y="121.7" width="0.9" height="6.0" fill="#28a028"/><rect x="245.4" y="123.2" width="2.2" height="3.0" fill="#a8f4a8"/><rect x="248.9" y="121.7" width="0.9" height="13.5" fill="#28a028"/><rect x="248.4" y="123.2" width="2.2" height="10.5" fill="#a8f4a8"/><rect x="252.9" y="127.0" width="0.9" height="7.5" fill="#28a028"/><rect x="251.9" y="128.9" width="2.8" height="3.7" fill="#000" stroke="#38c038" stroke-width="0.8"/><rect x="256.9" y="129.2" width="0.9" height="7.5" fill="#28a028"/><rect x="256.4" y="130.7" width="2.2" height="4.5" fill="#a8f4a8"/><rect x="259.9" y="133.0" width="0.9" height="12.7" fill="#28a028"/><rect x="259.4" y="134.5" width="2.2" height="9.7" fill="#a8f4a8"/><rect x="263.9" y="140.0" width="0.9" height="7.0" fill="#28a028"/><rect x="262.9" y="141.9" width="2.8" height="3.2" fill="#000" stroke="#38c038" stroke-width="0.8"/><rect x="267.9" y="136.7" width="0.9" height="10.5" fill="#28a028"/><rect x="266.9" y="138.6" width="2.8" height="6.7" fill="#000" stroke="#38c038" stroke-width="0.8"/><rect x="271.9" y="136.7" width="0.9" height="6.0" fill="#28a028"/><rect x="271.4" y="138.2" width="2.2" height="3.0" fill="#a8f4a8"/><rect x="275.9" y="139.0" width="0.9" height="4.5" fill="#28a028"/><rect x="275.4" y="140.5" width="2.2" height="1.5" fill="#a8f4a8"/><rect x="278.9" y="138.2" width="0.9" height="4.5" fill="#28a028"/><rect x="277.9" y="140.1" width="2.8" height="0.7" fill="#000" stroke="#38c038" stroke-width="0.8"/><rect x="282.9" y="137.5" width="0.9" height="4.5" fill="#28a028"/><rect x="281.9" y="139.4" width="2.8" height="0.7" fill="#000" stroke="#38c038" stroke-width="0.8"/><rect x="286.9" y="130.7" width="0.9" height="9.8" fill="#28a028"/><rect x="285.9" y="132.6" width="2.8" height="6.0" fill="#000" stroke="#38c038" stroke-width="0.8"/><rect x="290.9" y="129.5" width="0.9" height="11.0" fill="#28a028"/><rect x="289.9" y="131.4" width="2.8" height="7.2" fill="#000" stroke="#38c038" stroke-width="0.8"/><rect x="293.9" y="133.9" width="0.9" height="23.9" fill="#28a028"/><rect x="293.4" y="135.4" width="2.2" height="20.9" fill="#a8f4a8"/><rect x="297.9" y="147.1" width="0.9" height="9.4" fill="#28a028"/><rect x="296.9" y="149.0" width="2.8" height="5.6" fill="#000" stroke="#38c038" stroke-width="0.8"/><rect x="300.9" y="147.1" width="0.9" height="8.6" fill="#28a028"/><rect x="299.9" y="149.0" width="2.8" height="4.8" fill="#000" stroke="#38c038" stroke-width="0.8"/><rect x="304.9" y="147.1" width="0.9" height="12.8" fill="#28a028"/><rect x="304.4" y="148.6" width="2.2" height="9.8" fill="#a8f4a8"/><rect x="308.9" y="149.9" width="0.9" height="10.0" fill="#28a028"/><rect x="307.9" y="151.8" width="2.8" height="6.2" fill="#000" stroke="#38c038" stroke-width="0.8"/><rect x="312.9" y="156.2" width="0.9" height="7.9" fill="#28a028"/><rect x="312.4" y="157.7" width="2.2" height="4.9" fill="#a8f4a8"/><rect x="315.9" y="149.2" width="0.9" height="14.9" fill="#28a028"/><rect x="314.9" y="151.1" width="2.8" height="11.1" fill="#000" stroke="#38c038" stroke-width="0.8"/><rect x="319.9" y="148.5" width="0.9" height="17.0" fill="#28a028"/><rect x="319.4" y="150.0" width="2.2" height="14.0" fill="#a8f4a8"/><rect x="323.9" y="152.7" width="0.9" height="11.4" fill="#28a028"/><rect x="322.9" y="154.6" width="2.8" height="7.6" fill="#000" stroke="#38c038" stroke-width="0.8"/><rect x="326.9" y="153.4" width="0.9" height="10.7" fill="#28a028"/><rect x="326.4" y="154.9" width="2.2" height="7.7" fill="#a8f4a8"/><rect x="330.9" y="158.3" width="0.9" height="8.5" fill="#28a028"/><rect x="329.9" y="160.2" width="2.8" height="4.7" fill="#000" stroke="#38c038" stroke-width="0.8"/><rect x="334.9" y="160.4" width="0.9" height="12.7" fill="#28a028"/><rect x="334.4" y="161.9" width="2.2" height="9.7" fill="#a8f4a8"/><rect x="337.9" y="165.2" width="0.9" height="5.8" fill="#28a028"/><rect x="336.9" y="167.1" width="2.8" height="2.0" fill="#000" stroke="#38c038" stroke-width="0.8"/><rect x="342.9" y="168.7" width="0.9" height="12.0" fill="#28a028"/><rect x="342.4" y="170.2" width="2.2" height="9.0" fill="#a8f4a8"/><rect x="345.9" y="175.7" width="0.9" height="7.8" fill="#28a028"/><rect x="344.9" y="177.6" width="2.8" height="4.0" fill="#000" stroke="#38c038" stroke-width="0.8"/><rect x="103.7" y="45.6" width="369.8" height="153" fill="none" stroke="#b8b8b8" stroke-width="0.8"/><text x="104.8" y="52" font-size="5.4" fill="#f0f0f0" stroke="#f0f0f0" stroke-width="0.15" letter-spacing="-0.217" font-family="Liberation Sans">AUDUSD, H1, cell: 35, scale: 100%</text><rect x="473.5" y="59.6" width="1.5" height="0.8" fill="#d0d0d0"/><text x="476.3" y="62.0" font-size="5.8" fill="#e8e8e8" stroke="#e8e8e8" stroke-width="0.2" textLength="15.10" lengthAdjust="spacingAndGlyphs" font-family="Liberation Sans">1.0220</text><rect x="473.5" y="76.6" width="1.5" height="0.8" fill="#d0d0d0"/><text x="476.3" y="79.0" font-size="5.8" fill="#e8e8e8" stroke="#e8e8e8" stroke-width="0.2" textLength="15.10" lengthAdjust="spacingAndGlyphs" font-family="Liberation Sans">1.0185</text><rect x="473.5" y="93.6" width="1.5" height="0.8" fill="#d0d0d0"/><text x="476.3" y="96.0" font-size="5.8" fill="#e8e8e8" stroke="#e8e8e8" stroke-width="0.2" textLength="15.10" lengthAdjust="spacingAndGlyphs" font-family="Liberation Sans">1.0150</text><rect x="473.5" y="110.1" width="1.5" height="0.8" fill="#d0d0d0"/><text x="476.3" y="112.5" font-size="5.8" fill="#e8e8e8" stroke="#e8e8e8" stroke-width="0.2" textLength="15.10" lengthAdjust="spacingAndGlyphs" font-family="Liberation Sans">1.0115</text><rect x="473.5" y="127.1" width="1.5" height="0.8" fill="#d0d0d0"/><text x="476.3" y="129.5" font-size="5.8" fill="#e8e8e8" stroke="#e8e8e8" stroke-width="0.2" textLength="15.10" lengthAdjust="spacingAndGlyphs" font-family="Liberation Sans">1.0080</text><rect x="473.5" y="142.6" width="1.5" height="0.8" fill="#d0d0d0"/><text x="476.3" y="145.0" font-size="5.8" fill="#e8e8e8" stroke="#e8e8e8" stroke-width="0.2" textLength="15.10" lengthAdjust="spacingAndGlyphs" font-family="Liberation Sans">1.0045</text><rect x="473.5" y="159.1" width="1.5" height="0.8" fill="#d0d0d0"/><text x="476.3" y="161.5" font-size="5.8" fill="#e8e8e8" stroke="#e8e8e8" stroke-width="0.2" textLength="15.10" lengthAdjust="spacingAndGlyphs" font-family="Liberation Sans">1.0010</text><rect x="473.5" y="193.1" width="1.5" height="0.8" fill="#d0d0d0"/><text x="476.3" y="195.5" font-size="5.8" fill="#e8e8e8" stroke="#e8e8e8" stroke-width="0.2" textLength="15.10" lengthAdjust="spacingAndGlyphs" font-family="Liberation Sans">0.9940</text><rect x="475" y="150.2" width="17.5" height="5.5" fill="#1c7f7f"/><text x="476.3" y="154.79999999999998" font-size="5.8" fill="#ffffff" stroke="#ffffff" stroke-width="0.2" textLength="15.10" lengthAdjust="spacingAndGlyphs" font-family="Liberation Sans">1.0025</text><rect x="475" y="162.6" width="17.5" height="3.5999999999999943" fill="#e02020"/><text x="476.3" y="165.29999999999998" font-size="5.8" fill="#ffffff" stroke="#ffffff" stroke-width="0.2" textLength="15.10" lengthAdjust="spacingAndGlyphs" font-family="Liberation Sans">1.0005</text><rect x="475" y="166.2" width="17.5" height="5.400000000000006" fill="#1c7f7f"/><text x="476.3" y="170.7" font-size="5.8" fill="#ffffff" stroke="#ffffff" stroke-width="0.2" textLength="15.10" lengthAdjust="spacingAndGlyphs" font-family="Liberation Sans">0.9991</text><rect x="475" y="175" width="17.5" height="6.800000000000011" fill="#ffffff"/><text x="476.3" y="180.9" font-size="5.8" fill="#000000" stroke="#000000" stroke-width="0.2" textLength="15.10" lengthAdjust="spacingAndGlyphs" font-family="Liberation Sans">0.9972</text><rect x="475" y="183" width="17.5" height="5.599999999999994" fill="#1c7f7f"/><text x="476.3" y="187.7" font-size="5.8" fill="#ffffff" stroke="#ffffff" stroke-width="0.2" textLength="15.10" lengthAdjust="spacingAndGlyphs" font-family="Liberation Sans">0.9967</text><line x1="106.4" y1="198.6" x2="106.4" y2="200.1" stroke="#d0d0d0" stroke-width="0.7"/><text x="106.0" y="204.9" font-size="4.6" fill="#e0e0e0" stroke="#e0e0e0" stroke-width="0.2" letter-spacing="-0.069" font-family="Liberation Sans">2 Jan 2011</text><line x1="136.1" y1="198.6" x2="136.1" y2="200.1" stroke="#d0d0d0" stroke-width="0.7"/><text x="135.70000000000002" y="204.9" font-size="4.6" fill="#e0e0e0" stroke="#e0e0e0" stroke-width="0.2" letter-spacing="-0.094" font-family="Liberation Sans">3 Jan 07:00</text><line x1="166.5" y1="198.6" x2="166.5" y2="200.1" stroke="#d0d0d0" stroke-width="0.7"/><text x="166.10000000000002" y="204.9" font-size="4.6" fill="#e0e0e0" stroke="#e0e0e0" stroke-width="0.2" letter-spacing="-0.094" font-family="Liberation Sans">3 Jan 15:00</text><line x1="196.8" y1="198.6" x2="196.8" y2="200.1" stroke="#d0d0d0" stroke-width="0.7"/><text x="196.40000000000003" y="204.9" font-size="4.6" fill="#e0e0e0" stroke="#e0e0e0" stroke-width="0.2" letter-spacing="-0.094" font-family="Liberation Sans">3 Jan 23:00</text><line x1="226.6" y1="198.6" x2="226.6" y2="200.1" stroke="#d0d0d0" stroke-width="0.7"/><text x="226.20000000000002" y="204.9" font-size="4.6" fill="#e0e0e0" stroke="#e0e0e0" stroke-width="0.2" letter-spacing="-0.094" font-family="Liberation Sans">4 Jan 07:00</text><line x1="256.4" y1="198.6" x2="256.4" y2="200.1" stroke="#d0d0d0" stroke-width="0.7"/><text x="256.0" y="204.9" font-size="4.6" fill="#e0e0e0" stroke="#e0e0e0" stroke-width="0.2" letter-spacing="-0.094" font-family="Liberation Sans">4 Jan 15:00</text><line x1="286.4" y1="198.6" x2="286.4" y2="200.1" stroke="#d0d0d0" stroke-width="0.7"/><text x="286.0" y="204.9" font-size="4.6" fill="#e0e0e0" stroke="#e0e0e0" stroke-width="0.2" letter-spacing="-0.094" font-family="Liberation Sans">4 Jan 23:00</text><line x1="316.2" y1="198.6" x2="316.2" y2="200.1" stroke="#d0d0d0" stroke-width="0.7"/><text x="315.8" y="204.9" font-size="4.6" fill="#e0e0e0" stroke="#e0e0e0" stroke-width="0.2" letter-spacing="-0.094" font-family="Liberation Sans">5 Jan 07:00</text><line x1="346.2" y1="198.6" x2="346.2" y2="200.1" stroke="#d0d0d0" stroke-width="0.7"/><text x="345.8" y="204.9" font-size="4.6" fill="#e0e0e0" stroke="#e0e0e0" stroke-width="0.2" letter-spacing="-0.094" font-family="Liberation Sans">5 Jan 15:00</text></svg><svg style="left:502px;top:43px" width="393" height="165" viewBox="502 43 393 165"><line x1="507.5" y1="46" x2="507.5" y2="153" stroke="#2c2c3c" stroke-width="1" stroke-dasharray="1 1"/><line x1="507.5" y1="156" x2="507.5" y2="198" stroke="#2c2c3c" stroke-width="1" stroke-dasharray="1 1"/><line x1="522.5" y1="46" x2="522.5" y2="153" stroke="#2c2c3c" stroke-width="1" stroke-dasharray="1 1"/><line x1="522.5" y1="156" x2="522.5" y2="198" stroke="#2c2c3c" stroke-width="1" stroke-dasharray="1 1"/><line x1="537.5" y1="46" x2="537.5" y2="153" stroke="#2c2c3c" stroke-width="1" stroke-dasharray="1 1"/><line x1="537.5" y1="156" x2="537.5" y2="198" stroke="#2c2c3c" stroke-width="1" stroke-dasharray="1 1"/><line x1="552.5" y1="46" x2="552.5" y2="153" stroke="#2c2c3c" stroke-width="1" stroke-dasharray="1 1"/><line x1="552.5" y1="156" x2="552.5" y2="198" stroke="#2c2c3c" stroke-width="1" stroke-dasharray="1 1"/><line x1="567.5" y1="46" x2="567.5" y2="153" stroke="#2c2c3c" stroke-width="1" stroke-dasharray="1 1"/><line x1="567.5" y1="156" x2="567.5" y2="198" stroke="#2c2c3c" stroke-width="1" stroke-dasharray="1 1"/><line x1="582.5" y1="46" x2="582.5" y2="153" stroke="#2c2c3c" stroke-width="1" stroke-dasharray="1 1"/><line x1="582.5" y1="156" x2="582.5" y2="198" stroke="#2c2c3c" stroke-width="1" stroke-dasharray="1 1"/><line x1="597.5" y1="46" x2="597.5" y2="153" stroke="#2c2c3c" stroke-width="1" stroke-dasharray="1 1"/><line x1="597.5" y1="156" x2="597.5" y2="198" stroke="#2c2c3c" stroke-width="1" stroke-dasharray="1 1"/><line x1="612.5" y1="46" x2="612.5" y2="153" stroke="#2c2c3c" stroke-width="1" stroke-dasharray="1 1"/><line x1="612.5" y1="156" x2="612.5" y2="198" stroke="#2c2c3c" stroke-width="1" stroke-dasharray="1 1"/><line x1="627.5" y1="46" x2="627.5" y2="153" stroke="#2c2c3c" stroke-width="1" stroke-dasharray="1 1"/><line x1="627.5" y1="156" x2="627.5" y2="198" stroke="#2c2c3c" stroke-width="1" stroke-dasharray="1 1"/><line x1="642.5" y1="46" x2="642.5" y2="153" stroke="#2c2c3c" stroke-width="1" stroke-dasharray="1 1"/><line x1="642.5" y1="156" x2="642.5" y2="198" stroke="#2c2c3c" stroke-width="1" stroke-dasharray="1 1"/><line x1="657.5" y1="46" x2="657.5" y2="153" stroke="#2c2c3c" stroke-width="1" stroke-dasharray="1 1"/><line x1="657.5" y1="156" x2="657.5" y2="198" stroke="#2c2c3c" stroke-width="1" stroke-dasharray="1 1"/><line x1="672.5" y1="46" x2="672.5" y2="153" stroke="#2c2c3c" stroke-width="1" stroke-dasharray="1 1"/><line x1="672.5" y1="156" x2="672.5" y2="198" stroke="#2c2c3c" stroke-width="1" stroke-dasharray="1 1"/><line x1="687.5" y1="46" x2="687.5" y2="153" stroke="#2c2c3c" stroke-width="1" stroke-dasharray="1 1"/><line x1="687.5" y1="156" x2="687.5" y2="198" stroke="#2c2c3c" stroke-width="1" stroke-dasharray="1 1"/><line x1="702.5" y1="46" x2="702.5" y2="153" stroke="#2c2c3c" stroke-width="1" stroke-dasharray="1 1"/><line x1="702.5" y1="156" x2="702.5" y2="198" stroke="#2c2c3c" stroke-width="1" stroke-dasharray="1 1"/><line x1="717.5" y1="46" x2="717.5" y2="153" stroke="#2c2c3c" stroke-width="1" stroke-dasharray="1 1"/><line x1="717.5" y1="156" x2="717.5" y2="198" stroke="#2c2c3c" stroke-width="1" stroke-dasharray="1 1"/><line x1="732.5" y1="46" x2="732.5" y2="153" stroke="#2c2c3c" stroke-width="1" stroke-dasharray="1 1"/><line x1="732.5" y1="156" x2="732.5" y2="198" stroke="#2c2c3c" stroke-width="1" stroke-dasharray="1 1"/><line x1="747.5" y1="46" x2="747.5" y2="153" stroke="#2c2c3c" stroke-width="1" stroke-dasharray="1 1"/><line x1="747.5" y1="156" x2="747.5" y2="198" stroke="#2c2c3c" stroke-width="1" stroke-dasharray="1 1"/><line x1="762.5" y1="46" x2="762.5" y2="153" stroke="#2c2c3c" stroke-width="1" stroke-dasharray="1 1"/><line x1="762.5" y1="156" x2="762.5" y2="198" stroke="#2c2c3c" stroke-width="1" stroke-dasharray="1 1"/><line x1="777.5" y1="46" x2="777.5" y2="153" stroke="#2c2c3c" stroke-width="1" stroke-dasharray="1 1"/><line x1="777.5" y1="156" x2="777.5" y2="198" stroke="#2c2c3c" stroke-width="1" stroke-dasharray="1 1"/><line x1="792.5" y1="46" x2="792.5" y2="153" stroke="#2c2c3c" stroke-width="1" stroke-dasharray="1 1"/><line x1="792.5" y1="156" x2="792.5" y2="198" stroke="#2c2c3c" stroke-width="1" stroke-dasharray="1 1"/><line x1="807.5" y1="46" x2="807.5" y2="153" stroke="#2c2c3c" stroke-width="1" stroke-dasharray="1 1"/><line x1="807.5" y1="156" x2="807.5" y2="198" stroke="#2c2c3c" stroke-width="1" stroke-dasharray="1 1"/><line x1="822.5" y1="46" x2="822.5" y2="153" stroke="#2c2c3c" stroke-width="1" stroke-dasharray="1 1"/><line x1="822.5" y1="156" x2="822.5" y2="198" stroke="#2c2c3c" stroke-width="1" stroke-dasharray="1 1"/><line x1="837.5" y1="46" x2="837.5" y2="153" stroke="#2c2c3c" stroke-width="1" stroke-dasharray="1 1"/><line x1="837.5" y1="156" x2="837.5" y2="198" stroke="#2c2c3c" stroke-width="1" stroke-dasharray="1 1"/><line x1="852.5" y1="46" x2="852.5" y2="153" stroke="#2c2c3c" stroke-width="1" stroke-dasharray="1 1"/><line x1="852.5" y1="156" x2="852.5" y2="198" stroke="#2c2c3c" stroke-width="1" stroke-dasharray="1 1"/><line x1="867.5" y1="46" x2="867.5" y2="153" stroke="#2c2c3c" stroke-width="1" stroke-dasharray="1 1"/><line x1="867.5" y1="156" x2="867.5" y2="198" stroke="#2c2c3c" stroke-width="1" stroke-dasharray="1 1"/><line x1="505" y1="55.5" x2="873.8" y2="55.5" stroke="#2c2c3c" stroke-width="1" stroke-dasharray="1 1"/><line x1="505" y1="72.5" x2="873.8" y2="72.5" stroke="#2c2c3c" stroke-width="1" stroke-dasharray="1 1"/><line x1="505" y1="88.5" x2="873.8" y2="88.5" stroke="#2c2c3c" stroke-width="1" stroke-dasharray="1 1"/><line x1="505" y1="104.5" x2="873.8" y2="104.5" stroke="#2c2c3c" stroke-width="1" stroke-dasharray="1 1"/><line x1="505" y1="120.5" x2="873.8" y2="120.5" stroke="#2c2c3c" stroke-width="1" stroke-dasharray="1 1"/><line x1="505" y1="164.5" x2="873.8" y2="164.5" stroke="#222232" stroke-width="1" stroke-dasharray="1 1"/><line x1="505" y1="190.5" x2="873.8" y2="190.5" stroke="#222232" stroke-width="1" stroke-dasharray="1 1"/><line x1="505" y1="133.6" x2="873.8" y2="133.6" stroke="#5a5a88" stroke-width="0.8"/><defs><linearGradient id="vg" x1="0" y1="0" x2="0" y2="1"><stop offset="0" stop-color="#50b850"/><stop offset="0.5" stop-color="#2a8a2a"/><stop offset="1" stop-color="#1a6a1a"/></linearGradient></defs><path d="M505.0 153.0 L505.0 144.1 L505.8 145.4 L506.6 144.7 L507.4 145.7 L508.2 145.8 L509.0 143.3 L509.8 143.1 L510.6 146.8 L511.4 144.2 L512.2 144.1 L513.0 147.5 L513.8 145.1 L514.6 146.8 L515.4 145.1 L516.2 145.9 L517.0 143.7 L517.8 145.9 L518.6 146.9 L519.4 145.4 L520.2 146.3 L521.0 146.0 L521.8 143.3 L522.6 146.4 L523.4 145.7 L524.2 144.4 L525.0 143.1 L525.8 146.9 L526.6 145.1 L527.4 146.2 L528.2 147.0 L529.0 146.2 L529.8 147.1 L530.6 144.8 L531.4 146.6 L532.2 145.0 L533.0 147.2 L533.8 147.0 L534.6 143.4 L535.4 143.6 L536.2 144.0 L537.0 147.3 L537.8 145.0 L538.6 145.8 L539.4 144.4 L540.2 145.3 L541.0 144.7 L541.8 144.6 L542.6 145.6 L543.4 145.6 L544.2 147.1 L545.0 146.1 L545.8 147.2 L546.6 146.9 L547.4 147.5 L548.2 146.0 L549.0 143.7 L549.8 146.9 L550.6 147.3 L551.4 147.1 L552.2 145.6 L553.0 146.2 L553.8 144.0 L554.6 146.7 L555.4 145.6 L556.2 144.3 L557.0 143.3 L557.8 146.8 L558.6 147.5 L559.4 143.4 L560.2 146.6 L561.0 144.8 L561.8 143.7 L562.6 144.3 L563.4 146.5 L564.2 146.9 L565.0 143.2 L565.8 145.8 L566.6 143.2 L567.4 146.2 L568.2 144.5 L569.0 147.0 L569.8 147.4 L570.6 145.3 L571.4 147.5 L572.2 144.4 L573.0 143.3 L573.8 145.7 L574.6 143.1 L575.4 143.9 L576.2 144.8 L577.0 145.7 L577.8 143.7 L578.6 143.2 L579.4 146.9 L580.2 144.4 L581.0 147.3 L581.8 147.0 L582.6 144.7 L583.4 145.1 L584.2 145.3 L585.0 145.9 L585.8 145.7 L586.6 145.5 L587.4 145.8 L588.2 147.2 L589.0 145.3 L589.8 144.9 L590.6 146.2 L591.4 144.1 L592.2 144.4 L593.0 147.4 L593.8 145.3 L594.6 145.5 L595.4 143.1 L596.2 144.9 L597.0 145.6 L597.8 143.1 L598.6 145.8 L599.4 145.8 L600.2 143.3 L601.0 145.8 L601.8 145.1 L602.6 146.1 L603.4 144.6 L604.2 146.2 L605.0 146.3 L605.8 143.1 L606.6 143.3 L607.4 146.0 L608.2 147.3 L609.0 144.1 L609.8 145.1 L610.6 145.7 L611.4 144.4 L612.2 144.6 L613.0 144.4 L613.8 144.7 L614.6 145.7 L615.4 144.4 L616.2 144.7 L617.0 146.5 L617.8 143.1 L618.6 145.6 L619.4 146.3 L620.2 144.4 L621.0 144.0 L621.8 146.6 L622.6 144.1 L623.4 143.8 L624.2 145.0 L625.0 146.1 L625.8 143.5 L626.6 144.4 L627.4 144.5 L628.2 146.8 L629.0 145.0 L629.8 146.8 L630.6 143.8 L631.4 144.5 L632.2 145.9 L633.0 147.0 L633.8 145.0 L634.6 144.0 L635.4 143.5 L636.2 145.4 L637.0 143.9 L637.8 146.6 L638.6 146.8 L639.4 143.8 L640.2 144.3 L641.0 146.6 L641.8 145.9 L642.6 146.6 L643.4 144.6 L644.2 143.6 L645.0 144.3 L645.8 146.6 L646.6 144.2 L647.4 144.6 L648.2 144.9 L649.0 144.9 L649.8 144.8 L650.6 147.1 L651.4 143.7 L652.2 143.0 L653.0 147.2 L653.8 147.0 L654.6 147.4 L655.4 145.0 L656.2 147.3 L657.0 147.2 L657.8 144.0 L658.6 146.4 L659.4 146.8 L660.2 146.0 L661.0 145.3 L661.8 144.3 L662.6 144.5 L663.4 144.0 L664.2 143.3 L665.0 145.6 L665.8 144.3 L666.6 146.6 L667.4 143.2 L668.2 147.1 L669.0 146.1 L669.8 147.2 L670.6 147.0 L671.4 147.0 L672.2 145.6 L673.0 143.1 L673.8 146.4 L674.6 143.8 L675.4 144.3 L676.2 146.0 L677.0 145.4 L677.8 144.9 L678.6 147.2 L679.4 145.8 L680.2 144.5 L681.0 144.1 L681.8 146.9 L682.6 145.1 L683.4 146.5 L684.2 144.6 L685.0 143.9 L685.8 145.4 L686.6 146.7 L687.4 143.8 L688.2 146.6 L689.0 147.1 L689.8 146.6 L690.6 146.7 L691.4 143.0 L692.2 145.8 L693.0 146.9 L693.8 143.2 L694.6 144.2 L695.4 144.2 L696.2 145.4 L697.0 144.9 L697.8 145.1 L698.6 146.5 L699.4 143.0 L700.2 143.2 L701.0 143.6 L701.8 143.6 L702.6 143.3 L703.4 147.4 L704.2 146.8 L705.0 143.4 L705.8 145.3 L706.6 144.4 L707.4 144.4 L708.2 144.6 L709.0 145.9 L709.8 145.6 L710.6 144.6 L711.4 143.9 L712.2 144.5 L713.0 143.6 L713.8 145.5 L714.6 146.2 L715.4 144.7 L716.2 143.4 L717.0 143.8 L717.8 144.7 L718.6 145.7 L719.4 146.5 L720.2 144.7 L721.0 146.6 L721.8 145.8 L722.6 144.9 L723.4 144.7 L724.2 145.2 L725.0 146.2 L725.8 144.9 L726.6 146.1 L727.4 145.1 L728.2 144.1 L729.0 145.4 L729.8 146.1 L730.6 143.3 L731.4 144.9 L732.2 144.9 L733.0 147.0 L733.8 147.2 L734.6 144.7 L735.4 147.0 L736.2 146.6 L737.0 144.2 L737.8 145.1 L738.6 143.6 L739.4 146.7 L740.2 146.0 L741.0 147.0 L741.8 146.6 L742.6 146.0 L743.4 146.3 L744.2 145.5 L745.0 143.5 L745.8 145.6 L746.6 143.0 L747.4 143.6 L748.2 146.5 L749.0 143.2 L749.8 143.4 L750.0 153.0Z" fill="url(#vg)"/><path d="M505.0 84.4 L505.7 84.2 L506.3 83.7 L507.0 83.6 L507.8 82.1 L508.6 81.9 L509.5 77.9 L510.3 78.7 L510.9 83.2 L511.6 84.9 L512.2 88.5 L513.0 87.2 L513.7 90.0 L514.5 90.7 L515.2 93.3 L516.0 94.9 L516.7 94.3 L517.6 96.1 L518.4 97.4 L519.3 100.8 L520.1 99.9 L520.9 97.3 L521.7 99.2 L522.5 96.4 L523.3 97.7 L524.1 95.6 L524.9 94.7 L525.7 97.4 L526.5 94.7 L527.3 94.5 L528.1 96.9 L528.9 96.2 L529.7 93.8 L530.5 95.9 L531.3 94.1 L532.1 94.2 L533.0 92.1 L533.8 94.3 L534.7 93.0 L535.6 93.5 L536.4 92.9 L537.3 90.3 L538.1 93.3 L538.8 95.4 L539.6 98.2 L540.3 100.7 L541.1 104.4 L542.0 103.1 L542.8 98.6 L543.7 98.7 L544.6 95.1 L545.4 92.7 L546.3 92.1 L547.1 90.5 L548.0 89.5 L548.8 89.6 L549.7 90.0 L550.5 87.2 L551.4 90.1 L552.3 85.7 L553.1 87.3 L554.0 86.6 L554.8 82.7 L555.7 84.4 L556.5 81.9 L557.4 81.7 L558.2 78.6 L559.1 77.8 L560.0 78.8 L560.8 82.1 L561.7 79.9 L562.6 82.5 L563.4 83.6 L564.3 84.2 L565.1 84.1 L565.9 86.3 L566.7 89.0 L567.5 92.0 L568.3 87.9 L569.2 88.4 L570.0 86.9 L570.7 82.0 L571.3 73.9 L572.0 72.0 L572.8 69.7 L573.5 71.4 L574.3 73.1 L575.0 75.0 L575.8 73.7 L576.7 75.4 L577.5 73.6 L578.4 72.3 L579.3 71.9 L580.1 71.0 L581.0 70.2 L581.8 71.5 L582.5 74.5 L583.3 76.6 L584.0 74.6 L584.8 75.3 L585.7 79.1 L586.5 77.9 L587.4 77.8 L588.3 77.6 L589.1 79.3 L590.0 80.6 L590.8 79.3 L591.7 79.3 L592.5 78.1 L593.3 81.3 L594.2 78.2 L595.0 80.0 L595.8 80.7 L596.6 77.6 L597.4 79.2 L598.2 79.4 L599.0 77.7 L599.8 77.7 L600.6 74.7 L601.4 75.4 L602.3 76.0 L603.1 80.2 L604.0 80.0 L604.9 82.2 L605.7 85.9 L606.6 87.1 L607.5 86.5 L608.3 83.7 L609.2 82.9 L610.0 82.8 L610.9 80.9 L611.7 79.2 L612.5 78.2 L613.3 75.9 L614.1 75.3 L614.9 76.1 L615.7 76.9 L616.6 76.6 L617.4 77.0 L618.2 77.4 L619.0 77.4 L619.9 79.0 L620.7 81.7 L621.6 82.9 L622.4 81.9 L623.2 84.3 L624.1 85.1 L624.9 85.7 L625.8 86.4 L626.6 85.2 L627.4 82.2 L628.1 81.9 L628.9 78.9 L629.7 78.0 L630.5 79.9 L631.3 80.3 L632.0 79.7 L632.8 82.8 L633.6 82.5 L634.5 79.3 L635.3 74.2 L636.2 73.2 L637.0 69.1 L637.9 67.6 L638.7 63.9 L639.6 66.8 L640.4 67.9 L641.3 70.2 L642.1 67.7 L643.0 68.0 L643.8 67.5 L644.7 69.0 L645.5 68.6 L646.4 71.6 L647.2 69.7 L648.0 67.0 L648.7 65.9 L649.5 63.8 L650.3 60.2 L651.1 61.8 L651.8 62.0 L652.6 66.0 L653.3 67.9 L654.1 67.8 L654.9 69.9 L655.7 71.3 L656.4 72.6 L657.2 71.8 L658.0 75.3 L658.8 78.7 L659.5 83.1 L660.3 86.3 L661.0 91.1 L661.8 95.8 L662.6 94.5 L663.4 94.1 L664.1 90.8 L664.9 90.5 L665.7 90.8 L666.4 93.4 L667.0 93.8 L667.9 94.2 L668.7 92.7 L669.5 89.3 L670.4 89.6 L671.2 87.4 L672.1 85.5 L672.9 86.6 L673.7 88.1 L674.5 88.4 L675.3 89.2 L676.1 89.5 L676.9 91.9 L677.7 92.4 L678.5 94.0 L679.3 93.8 L680.1 92.3 L680.9 94.6 L681.8 91.2 L682.6 92.4 L683.4 91.8 L684.2 92.1 L685.0 90.9 L685.9 93.0 L686.8 90.9 L687.6 89.3 L688.5 90.9 L689.4 88.6 L690.3 89.8 L691.1 91.4 L692.0 94.6 L692.8 98.3 L693.7 98.7 L694.5 98.1 L695.4 100.4 L696.3 100.6 L697.1 100.5 L698.0 100.5 L698.9 101.5 L699.7 100.8 L700.5 101.5 L701.4 101.0 L702.2 99.0 L703.1 97.5 L703.9 99.7 L704.7 96.8 L705.6 97.5 L706.4 99.4 L707.2 99.9 L708.0 98.5 L708.8 100.5 L709.6 101.7 L710.5 100.2 L711.3 100.7 L712.1 100.2 L713.0 100.2 L713.8 102.3 L714.7 99.9 L715.5 101.7 L716.4 101.2 L717.2 99.8 L718.1 98.3 L718.9 100.6 L719.8 98.6 L720.6 100.2 L721.3 101.8 L722.1 106.1 L722.8 106.3 L723.6 107.4 L724.5 107.5 L725.3 105.6 L726.2 106.7 L727.1 105.5 L727.9 104.3 L728.8 105.4 L729.6 107.5 L730.5 106.5 L731.3 110.3 L732.2 111.3 L733.0 115.6 L733.9 117.0 L734.7 114.3 L735.5 113.6 L736.2 112.4 L737.0 114.6 L737.8 111.4 L738.6 115.6 L739.3 118.2 L740.1 121.9 L740.8 124.8 L741.6 128.4 L742.4 127.9 L743.2 132.0 L743.9 132.2 L744.7 134.8 L745.5 135.9 L746.3 134.5 L747.2 134.0 L748.0 132.5 L748.9 132.6 L749.7 134.4 L750.6 134.0" fill="none" stroke="#24a824" stroke-width="1.1"/><path d="M512.0 86.0 L513.4 87.6 L515.4 89.8 L517.7 92.2 L520.0 94.0 L522.1 95.2 L524.2 96.1 L526.8 96.7 L530.0 97.0 L534.4 97.0 L539.7 96.6 L545.1 96.0 L550.0 95.0 L554.1 93.7 L557.8 92.0 L561.4 90.1 L565.0 88.0 L568.6 85.5 L572.2 82.5 L575.9 79.8 L580.0 78.0 L584.5 77.4 L589.4 77.7 L594.5 78.4 L600.0 79.0 L606.1 79.8 L612.8 80.9 L619.3 81.8 L625.0 82.0 L629.3 81.0 L632.8 79.2 L636.1 77.4 L640.0 76.0 L644.8 75.1 L650.0 74.3 L655.2 74.1 L660.0 75.0 L664.1 77.5 L667.8 81.1 L671.4 85.0 L675.0 88.0 L678.8 89.8 L682.5 90.9 L686.2 91.9 L690.0 93.0 L693.6 94.5 L697.2 96.1 L700.9 97.7 L705.0 99.0 L709.8 99.8 L715.1 100.2 L720.4 100.8 L725.0 102.0 L728.9 103.9 L732.2 106.3 L735.3 109.1 L738.0 112.0 L740.4 115.5 L742.6 119.4 L744.4 123.1 L746.0 126.0 L747.4 127.8 L748.5 128.9 L749.4 129.5 L750.0 130.0" fill="none" stroke="#b02818" stroke-width="0.8"/><path d="M508.0 88.0 L509.2 89.2 L511.0 90.9 L513.0 92.6 L515.0 94.0 L517.0 94.8 L519.0 95.4 L521.0 95.7 L523.0 96.0 L524.5 96.1 L525.8 96.1 L527.4 96.0 L530.0 96.0 L534.3 96.2 L539.7 96.6 L545.3 96.6 L550.0 96.0 L553.5 94.4 L556.5 92.0 L559.1 89.4 L561.7 87.1 L564.4 85.2 L566.9 83.3 L569.5 81.6 L572.0 80.0 L574.5 78.2 L577.0 76.4 L579.6 75.0 L582.3 74.3 L585.0 74.8 L587.7 76.2 L590.9 77.8 L595.0 79.0 L600.7 79.7 L607.5 80.3 L614.3 80.7 L620.0 81.0 L624.1 81.4 L627.3 81.8 L630.1 81.8 L633.0 81.0 L636.2 78.8 L639.4 75.7 L642.4 72.4 L645.0 70.0 L647.1 68.5 L648.9 67.6 L650.4 67.1 L652.0 67.0 L653.4 67.0 L654.7 67.4 L656.1 68.3 L658.0 70.0 L660.4 73.1 L663.1 77.2 L666.3 81.5 L670.0 85.0 L674.7 87.3 L680.1 89.1 L685.5 90.5 L690.0 92.0 L693.0 93.7 L695.0 95.3 L697.0 96.8 L700.0 98.0 L704.5 98.7 L710.0 99.1 L715.5 99.5 L720.0 100.0 L723.2 100.7 L725.6 101.5 L727.7 102.5 L730.0 104.0 L732.5 106.0 L735.0 108.4 L737.5 111.1 L740.0 114.0 L742.7 117.3 L745.6 121.1 L748.2 124.6 L750.0 127.0" fill="none" stroke="#e0d050" stroke-width="0.8"/><rect x="504.5" y="45.6" width="369.3" height="107.5" fill="none" stroke="#c0c0c0" stroke-width="0.8"/><rect x="504.5" y="155.3" width="369.3" height="42.9" fill="none" stroke="#c0c0c0" stroke-width="0.8"/><text x="506.0" y="52.2" font-size="5.4" fill="#f0f0f0" stroke="#f0f0f0" stroke-width="0.15" letter-spacing="-0.213" font-family="Liberation Sans">EURUSD, M15, cell: 60, scale: 100%</text><text x="505.2" y="161" font-size="5.4" fill="#f0f0f0" stroke="#f0f0f0" stroke-width="0.15" letter-spacing="-0.098" font-family="Liberation Sans">Stochastic (8, 3, 3, High/Low)</text><path d="M507.5 175.5 L507.9 174.9 L508.6 174.2 L509.3 173.2 L510.1 172.2 L510.8 171.3 L511.5 170.5 L512.1 169.5 L512.7 168.1 L513.2 166.8 L513.8 165.9 L514.3 165.8 L514.7 166.9 L515.0 169.7 L515.2 174.1 L515.3 179.2 L515.4 184.4 L515.7 188.8 L516.3 191.8 L517.2 193.4 L518.3 194.2 L519.6 194.3 L520.9 193.6 L522.2 192.3 L523.3 190.3 L524.3 187.0 L525.2 182.4 L526.1 177.1 L527.0 171.7 L527.9 167.1 L528.7 163.8 L529.5 162.0 L530.3 161.0 L531.0 160.7 L531.8 161.0 L532.6 161.5 L533.4 162.3 L534.3 163.4 L535.2 165.0 L536.1 166.9 L537.0 169.0 L537.9 171.2 L538.8 173.2 L539.6 175.6 L540.4 178.5 L541.2 181.4 L542.0 183.9 L542.7 185.5 L543.5 185.6 L544.3 183.7 L545.1 180.0 L545.9 175.4 L546.6 170.6 L547.4 166.5 L548.2 163.8 L549.0 162.6 L549.7 162.4 L550.4 162.8 L551.2 163.5 L551.9 164.5 L552.8 165.4 L553.8 166.5 L554.9 168.2 L556.0 170.0 L557.1 171.6 L558.1 172.8 L559.0 173.2 L559.7 172.2 L560.2 170.0 L560.6 167.3 L561.0 164.9 L561.5 163.5 L562.2 163.8 L563.1 166.8 L564.0 171.9 L565.1 178.1 L566.2 184.1 L567.3 188.5 L568.4 190.3 L569.4 188.5 L570.5 184.1 L571.5 178.1 L572.5 171.9 L573.6 166.8 L574.6 163.8 L575.7 163.2 L576.7 163.9 L577.8 165.7 L578.8 168.1 L579.9 170.7 L580.8 173.2 L581.6 176.0 L582.3 179.6 L583.0 183.4 L583.6 187.0 L584.5 189.9 L585.5 191.8 L586.9 192.5 L588.5 192.5 L590.2 191.8 L592.0 190.6 L593.6 189.1 L594.8 187.2 L595.6 184.5 L596.2 180.6 L596.5 176.4 L596.9 172.5 L597.3 169.6 L597.9 168.5 L598.8 169.7 L599.8 172.6 L600.9 176.6 L602.0 180.9 L603.1 184.6 L604.1 187.2 L605.0 188.8 L605.7 190.0 L606.5 190.7 L607.2 190.8 L607.9 190.2 L608.8 188.7 L609.7 185.5 L610.7 180.5 L611.7 174.8 L612.8 169.4 L613.9 165.4 L615.0 163.8 L616.2 165.3 L617.5 169.3 L618.9 174.6 L620.3 180.3 L621.6 185.3 L622.8 188.7 L623.9 190.6 L625.0 191.8 L626.0 192.4 L627.0 192.4 L628.0 191.7 L629.0 190.3 L630.0 187.8 L631.1 184.1 L632.1 179.8 L633.2 175.4 L634.2 171.4 L635.2 168.5 L636.2 166.4 L637.1 164.7 L638.0 163.5 L638.9 162.9 L639.8 162.9 L640.8 163.8 L641.8 166.1 L642.8 169.9 L643.9 174.4 L644.9 178.8 L646.0 182.2 L647.0 184.0 L648.0 183.4 L649.0 181.0 L650.1 177.7 L651.1 174.4 L652.2 172.1 L653.3 171.6 L654.5 173.6 L655.8 177.4 L657.1 182.2 L658.4 187.1 L659.7 191.1 L661.0 193.4 L662.3 194.0 L663.7 193.5 L665.1 192.1 L666.4 190.2 L667.7 188.0 L668.8 185.6 L669.7 182.4 L670.5 178.1 L671.2 173.4 L671.9 169.1 L672.7 166.2 L673.5 165.4 L674.4 167.7 L675.5 172.8 L676.5 179.1 L677.6 185.3 L678.6 190.0 L679.7 191.8 L680.8 189.9 L681.8 185.2 L682.9 179.0 L683.9 172.5 L685.0 167.0 L685.9 163.8 L686.8 163.2 L687.6 164.2 L688.4 166.1 L689.2 168.5 L689.9 170.5 L690.6 171.6 L691.2 171.4 L691.6 170.4 L692.1 169.1 L692.5 168.0 L693.0 167.6 L693.7 168.5 L694.5 171.4 L695.5 176.2 L696.5 181.7 L697.6 186.9 L698.7 190.6 L699.9 191.8 L701.1 189.5 L702.4 184.4 L703.7 177.9 L705.0 171.3 L706.4 166.2 L707.7 163.8 L709.0 164.9 L710.4 168.5 L711.8 173.5 L713.1 178.8 L714.4 183.2 L715.5 185.6 L716.4 185.7 L717.2 184.5 L717.8 182.3 L718.4 179.9 L719.2 177.7 L720.1 176.3 L721.3 175.7 L722.6 175.4 L724.0 175.3 L725.4 175.5 L726.7 175.8 L727.9 176.3 L728.8 177.1 L729.6 178.3 L730.2 179.7 L730.9 181.0 L731.7 182.0 L732.6 182.5 L733.7 182.1 L735.0 181.0 L736.3 179.6 L737.7 178.3 L739.1 177.5 L740.4 177.8 L741.7 179.5 L743.1 182.3 L744.5 185.7 L745.8 189.1 L747.0 191.8 L748.1 193.4 L749.0 193.6 L749.8 192.7 L750.5 191.3 L751.1 189.6 L751.6 188.1 L752.0 187.2" fill="none" stroke="#6a2a3a" stroke-width="0.7" stroke-dasharray="1 1"/><path d="M506.0 175.0 L506.4 174.4 L507.1 173.7 L507.8 172.7 L508.6 171.7 L509.3 170.8 L510.0 170.0 L510.6 169.0 L511.2 167.6 L511.8 166.3 L512.3 165.4 L512.8 165.3 L513.2 166.4 L513.5 169.2 L513.7 173.6 L513.8 178.7 L513.9 183.9 L514.2 188.3 L514.8 191.3 L515.7 192.9 L516.8 193.7 L518.1 193.8 L519.4 193.1 L520.7 191.8 L521.8 189.8 L522.8 186.5 L523.7 181.9 L524.6 176.6 L525.5 171.2 L526.4 166.6 L527.2 163.3 L528.0 161.5 L528.8 160.5 L529.5 160.2 L530.3 160.5 L531.1 161.0 L531.9 161.8 L532.8 162.9 L533.7 164.5 L534.6 166.4 L535.5 168.5 L536.4 170.7 L537.3 172.7 L538.1 175.1 L538.9 178.0 L539.7 180.9 L540.5 183.4 L541.2 185.0 L542.0 185.1 L542.8 183.2 L543.6 179.5 L544.4 174.9 L545.1 170.1 L545.9 166.0 L546.7 163.3 L547.5 162.1 L548.2 161.9 L548.9 162.2 L549.7 163.0 L550.4 164.0 L551.3 164.9 L552.3 166.0 L553.4 167.7 L554.5 169.5 L555.6 171.1 L556.6 172.3 L557.5 172.7 L558.2 171.7 L558.7 169.5 L559.1 166.8 L559.5 164.4 L560.0 163.0 L560.7 163.3 L561.6 166.3 L562.5 171.4 L563.6 177.6 L564.7 183.6 L565.8 188.0 L566.9 189.8 L567.9 188.0 L569.0 183.6 L570.0 177.6 L571.0 171.4 L572.1 166.3 L573.1 163.3 L574.2 162.7 L575.2 163.4 L576.3 165.2 L577.3 167.6 L578.4 170.2 L579.3 172.7 L580.1 175.5 L580.8 179.1 L581.5 182.9 L582.1 186.5 L583.0 189.4 L584.0 191.3 L585.4 192.0 L587.0 192.0 L588.8 191.3 L590.5 190.1 L592.1 188.6 L593.3 186.7 L594.1 184.0 L594.7 180.1 L595.0 175.9 L595.4 172.0 L595.8 169.1 L596.4 168.0 L597.3 169.2 L598.3 172.1 L599.4 176.1 L600.5 180.4 L601.6 184.1 L602.6 186.7 L603.5 188.3 L604.2 189.5 L605.0 190.2 L605.7 190.3 L606.4 189.7 L607.3 188.2 L608.2 185.0 L609.2 180.0 L610.2 174.3 L611.3 168.9 L612.4 164.9 L613.5 163.3 L614.7 164.8 L616.0 168.8 L617.4 174.1 L618.8 179.8 L620.1 184.8 L621.3 188.2 L622.4 190.1 L623.5 191.3 L624.5 191.9 L625.5 191.9 L626.5 191.2 L627.5 189.8 L628.5 187.3 L629.6 183.6 L630.6 179.3 L631.7 174.9 L632.7 170.9 L633.7 168.0 L634.7 165.9 L635.6 164.2 L636.5 163.0 L637.4 162.4 L638.3 162.4 L639.3 163.3 L640.3 165.6 L641.3 169.4 L642.4 173.9 L643.4 178.3 L644.5 181.7 L645.5 183.5 L646.5 182.9 L647.5 180.5 L648.6 177.2 L649.6 173.9 L650.7 171.6 L651.8 171.1 L653.0 173.1 L654.3 176.9 L655.6 181.7 L656.9 186.6 L658.2 190.6 L659.5 192.9 L660.8 193.5 L662.2 193.0 L663.6 191.6 L664.9 189.7 L666.2 187.5 L667.3 185.1 L668.2 181.9 L669.0 177.6 L669.8 172.9 L670.4 168.6 L671.2 165.7 L672.0 164.9 L672.9 167.2 L674.0 172.3 L675.0 178.6 L676.1 184.8 L677.1 189.5 L678.2 191.3 L679.3 189.4 L680.3 184.7 L681.4 178.5 L682.4 172.0 L683.5 166.5 L684.4 163.3 L685.3 162.7 L686.1 163.7 L686.9 165.6 L687.7 168.0 L688.4 170.0 L689.1 171.1 L689.7 170.9 L690.1 169.9 L690.6 168.6 L691.0 167.5 L691.5 167.1 L692.2 168.0 L693.0 170.9 L694.0 175.7 L695.0 181.2 L696.1 186.4 L697.2 190.1 L698.4 191.3 L699.6 189.0 L700.9 183.9 L702.2 177.4 L703.5 170.8 L704.9 165.7 L706.2 163.3 L707.5 164.4 L708.9 168.0 L710.3 173.0 L711.6 178.3 L712.9 182.7 L714.0 185.1 L714.9 185.2 L715.7 184.0 L716.3 181.8 L716.9 179.4 L717.7 177.2 L718.6 175.8 L719.8 175.2 L721.1 174.9 L722.5 174.8 L723.9 175.0 L725.2 175.3 L726.4 175.8 L727.3 176.6 L728.1 177.8 L728.7 179.2 L729.4 180.5 L730.2 181.5 L731.1 182.0 L732.2 181.6 L733.5 180.5 L734.8 179.1 L736.2 177.8 L737.6 177.0 L738.9 177.3 L740.2 179.0 L741.6 181.8 L743.0 185.2 L744.3 188.6 L745.5 191.3 L746.6 192.9 L747.5 193.1 L748.3 192.2 L749.0 190.8 L749.6 189.1 L750.1 187.6 L750.5 186.7" fill="none" stroke="#5a6ad0" stroke-width="0.8"/><rect x="873.8" y="55.6" width="1.5" height="0.8" fill="#d0d0d0"/><text x="876.8" y="58.0" font-size="5.8" fill="#e8e8e8" stroke="#e8e8e8" stroke-width="0.2" textLength="15.10" lengthAdjust="spacingAndGlyphs" font-family="Liberation Sans">1.3440</text><rect x="873.8" y="71.6" width="1.5" height="0.8" fill="#d0d0d0"/><text x="876.8" y="74.0" font-size="5.8" fill="#e8e8e8" stroke="#e8e8e8" stroke-width="0.2" textLength="15.10" lengthAdjust="spacingAndGlyphs" font-family="Liberation Sans">1.3380</text><rect x="873.8" y="87.6" width="1.5" height="0.8" fill="#d0d0d0"/><text x="876.8" y="90.0" font-size="5.8" fill="#e8e8e8" stroke="#e8e8e8" stroke-width="0.2" textLength="15.10" lengthAdjust="spacingAndGlyphs" font-family="Liberation Sans">1.3320</text><rect x="873.8" y="103.6" width="1.5" height="0.8" fill="#d0d0d0"/><text x="876.8" y="106.0" font-size="5.8" fill="#e8e8e8" stroke="#e8e8e8" stroke-width="0.2" textLength="15.10" lengthAdjust="spacingAndGlyphs" font-family="Liberation Sans">1.3260</text><rect x="873.8" y="119.6" width="1.5" height="0.8" fill="#d0d0d0"/><text x="876.8" y="122.0" font-size="5.8" fill="#e8e8e8" stroke="#e8e8e8" stroke-width="0.2" textLength="15.10" lengthAdjust="spacingAndGlyphs" font-family="Liberation Sans">1.3200</text><rect x="873.8" y="151.6" width="1.5" height="0.8" fill="#d0d0d0"/><text x="876.8" y="154.0" font-size="5.8" fill="#e8e8e8" stroke="#e8e8e8" stroke-width="0.2" textLength="15.10" lengthAdjust="spacingAndGlyphs" font-family="Liberation Sans">1.3080</text><rect x="876" y="130.8" width="17" height="6.5" fill="#ffffff"/><text x="876.8" y="136.1" font-size="5.8" fill="#000000" stroke="#000000" stroke-width="0.2" textLength="15.10" lengthAdjust="spacingAndGlyphs" font-family="Liberation Sans">1.3148</text><text x="876.8" y="160.5" font-size="5.8" fill="#e8e8e8" stroke="#e8e8e8" stroke-width="0.2" textLength="7.75" lengthAdjust="spacingAndGlyphs" font-family="Liberation Sans">100</text><text x="876.8" y="166.2" font-size="5.8" fill="#e8e8e8" stroke="#e8e8e8" stroke-width="0.2" textLength="5.30" lengthAdjust="spacingAndGlyphs" font-family="Liberation Sans">80</text><text x="876.8" y="192.0" font-size="5.8" fill="#e8e8e8" stroke="#e8e8e8" stroke-width="0.2" textLength="5.30" lengthAdjust="spacingAndGlyphs" font-family="Liberation Sans">20</text><text x="877" y="197.6" font-size="5.8" fill="#e8e8e8" stroke="#e8e8e8" stroke-width="0.2" font-family="Liberation Sans">0</text><line x1="507.2" y1="198.2" x2="507.2" y2="199.7" stroke="#d0d0d0" stroke-width="0.7"/><text x="506.8" y="204.9" font-size="4.6" fill="#e0e0e0" stroke="#e0e0e0" stroke-width="0.2" letter-spacing="-0.069" font-family="Liberation Sans">2 Jan 2011</text><line x1="537" y1="198.2" x2="537" y2="199.7" stroke="#d0d0d0" stroke-width="0.7"/><text x="536.5999999999999" y="204.9" font-size="4.6" fill="#e0e0e0" stroke="#e0e0e0" stroke-width="0.2" letter-spacing="-0.094" font-family="Liberation Sans">3 Jan 07:00</text><line x1="567" y1="198.2" x2="567" y2="199.7" stroke="#d0d0d0" stroke-width="0.7"/><text x="566.5999999999999" y="204.9" font-size="4.6" fill="#e0e0e0" stroke="#e0e0e0" stroke-width="0.2" letter-spacing="-0.094" font-family="Liberation Sans">3 Jan 15:00</text><line x1="596.8" y1="198.2" x2="596.8" y2="199.7" stroke="#d0d0d0" stroke-width="0.7"/><text x="596.3999999999999" y="204.9" font-size="4.6" fill="#e0e0e0" stroke="#e0e0e0" stroke-width="0.2" letter-spacing="-0.094" font-family="Liberation Sans">3 Jan 23:00</text><line x1="627.2" y1="198.2" x2="627.2" y2="199.7" stroke="#d0d0d0" stroke-width="0.7"/><text x="626.8" y="204.9" font-size="4.6" fill="#e0e0e0" stroke="#e0e0e0" stroke-width="0.2" letter-spacing="-0.094" font-family="Liberation Sans">4 Jan 07:00</text><line x1="657.5" y1="198.2" x2="657.5" y2="199.7" stroke="#d0d0d0" stroke-width="0.7"/><text x="657.0999999999999" y="204.9" font-size="4.6" fill="#e0e0e0" stroke="#e0e0e0" stroke-width="0.2" letter-spacing="-0.094" font-family="Liberation Sans">4 Jan 15:00</text><line x1="687.3" y1="198.2" x2="687.3" y2="199.7" stroke="#d0d0d0" stroke-width="0.7"/><text x="686.8999999999999" y="204.9" font-size="4.6" fill="#e0e0e0" stroke="#e0e0e0" stroke-width="0.2" letter-spacing="-0.094" font-family="Liberation Sans">4 Jan 23:00</text><line x1="716.8" y1="198.2" x2="716.8" y2="199.7" stroke="#d0d0d0" stroke-width="0.7"/><text x="716.3999999999999" y="204.9" font-size="4.6" fill="#e0e0e0" stroke="#e0e0e0" stroke-width="0.2" letter-spacing="-0.094" font-family="Liberation Sans">5 Jan 07:00</text><line x1="747" y1="198.2" x2="747" y2="199.7" stroke="#d0d0d0" stroke-width="0.7"/><text x="746.5999999999999" y="204.9" font-size="4.6" fill="#e0e0e0" stroke="#e0e0e0" stroke-width="0.2" letter-spacing="-0.094" font-family="Liberation Sans">5 Jan 15:00</text></svg><svg style="left:101px;top:227px" width="393" height="166" viewBox="101 227 393 166"><line x1="106.5" y1="230" x2="106.5" y2="384" stroke="#242430" stroke-width="1" stroke-dasharray="1 1"/><line x1="121.5" y1="230" x2="121.5" y2="384" stroke="#242430" stroke-width="1" stroke-dasharray="1 1"/><line x1="136.5" y1="230" x2="136.5" y2="384" stroke="#242430" stroke-width="1" stroke-dasharray="1 1"/><line x1="151.5" y1="230" x2="151.5" y2="384" stroke="#242430" stroke-width="1" stroke-dasharray="1 1"/><line x1="166.5" y1="230" x2="166.5" y2="384" stroke="#242430" stroke-width="1" stroke-dasharray="1 1"/><line x1="181.5" y1="230" x2="181.5" y2="384" stroke="#242430" stroke-width="1" stroke-dasharray="1 1"/><line x1="196.5" y1="230" x2="196.5" y2="384" stroke="#242430" stroke-width="1" stroke-dasharray="1 1"/><line x1="211.5" y1="230" x2="211.5" y2="384" stroke="#242430" stroke-width="1" stroke-dasharray="1 1"/><line x1="226.5" y1="230" x2="226.5" y2="384" stroke="#242430" stroke-width="1" stroke-dasharray="1 1"/><line x1="241.5" y1="230" x2="241.5" y2="384" stroke="#242430" stroke-width="1" stroke-dasharray="1 1"/><line x1="256.5" y1="230" x2="256.5" y2="384" stroke="#242430" stroke-width="1" stroke-dasharray="1 1"/><line x1="271.5" y1="230" x2="271.5" y2="384" stroke="#242430" stroke-width="1" stroke-dasharray="1 1"/><line x1="286.5" y1="230" x2="286.5" y2="384" stroke="#242430" stroke-width="1" stroke-dasharray="1 1"/><line x1="301.5" y1="230" x2="301.5" y2="384" stroke="#242430" stroke-width="1" stroke-dasharray="1 1"/><line x1="316.5" y1="230" x2="316.5" y2="384" stroke="#242430" stroke-width="1" stroke-dasharray="1 1"/><line x1="331.5" y1="230" x2="331.5" y2="384" stroke="#242430" stroke-width="1" stroke-dasharray="1 1"/><line x1="346.5" y1="230" x2="346.5" y2="384" stroke="#242430" stroke-width="1" stroke-dasharray="1 1"/><line x1="361.5" y1="230" x2="361.5" y2="384" stroke="#242430" stroke-width="1" stroke-dasharray="1 1"/><line x1="376.5" y1="230" x2="376.5" y2="384" stroke="#242430" stroke-width="1" stroke-dasharray="1 1"/><line x1="391.5" y1="230" x2="391.5" y2="384" stroke="#242430" stroke-width="1" stroke-dasharray="1 1"/><line x1="406.5" y1="230" x2="406.5" y2="384" stroke="#242430" stroke-width="1" stroke-dasharray="1 1"/><line x1="421.5" y1="230" x2="421.5" y2="384" stroke="#242430" stroke-width="1" stroke-dasharray="1 1"/><line x1="436.5" y1="230" x2="436.5" y2="384" stroke="#242430" stroke-width="1" stroke-dasharray="1 1"/><line x1="451.5" y1="230" x2="451.5" y2="384" stroke="#242430" stroke-width="1" stroke-dasharray="1 1"/><line x1="466.5" y1="230" x2="466.5" y2="384" stroke="#242430" stroke-width="1" stroke-dasharray="1 1"/><line x1="104" y1="236.5" x2="474" y2="236.5" stroke="#242430" stroke-width="1" stroke-dasharray="1 1"/><line x1="104" y1="252.5" x2="474" y2="252.5" stroke="#242430" stroke-width="1" stroke-dasharray="1 1"/><line x1="104" y1="269.5" x2="474" y2="269.5" stroke="#242430" stroke-width="1" stroke-dasharray="1 1"/><line x1="104" y1="286.5" x2="474" y2="286.5" stroke="#242430" stroke-width="1" stroke-dasharray="1 1"/><line x1="104" y1="303.5" x2="474" y2="303.5" stroke="#242430" stroke-width="1" stroke-dasharray="1 1"/><line x1="104" y1="320.5" x2="474" y2="320.5" stroke="#242430" stroke-width="1" stroke-dasharray="1 1"/><line x1="104" y1="336.5" x2="474" y2="336.5" stroke="#242430" stroke-width="1" stroke-dasharray="1 1"/><line x1="104" y1="353.5" x2="474" y2="353.5" stroke="#242430" stroke-width="1" stroke-dasharray="1 1"/><line x1="104" y1="370.5" x2="474" y2="370.5" stroke="#242430" stroke-width="1" stroke-dasharray="1 1"/><line x1="104" y1="243.5" x2="474" y2="243.5" stroke="#6a6a80" stroke-width="0.8"/><line x1="104" y1="319.3" x2="474" y2="319.3" stroke="#2a8a2a" stroke-width="0.8" stroke-dasharray="2 1.5"/><rect x="106.9" y="353.0" width="0.9" height="17.5" fill="#28a028"/><rect x="105.9" y="354.9" width="2.8" height="13.7" fill="#000" stroke="#38c038" stroke-width="0.8"/><rect x="110.9" y="352.1" width="0.9" height="13.4" fill="#28a028"/><rect x="109.9" y="354.0" width="2.8" height="9.6" fill="#000" stroke="#38c038" stroke-width="0.8"/><rect x="113.9" y="352.5" width="0.9" height="4.5" fill="#28a028"/><rect x="113.4" y="354.0" width="2.2" height="1.5" fill="#a8f4a8"/><rect x="117.9" y="353.0" width="0.9" height="4.5" fill="#28a028"/><rect x="117.4" y="354.5" width="2.2" height="1.5" fill="#a8f4a8"/><rect x="121.9" y="354.5" width="0.9" height="4.5" fill="#28a028"/><rect x="121.4" y="356.0" width="2.2" height="1.5" fill="#a8f4a8"/><rect x="125.9" y="355.0" width="0.9" height="4.5" fill="#28a028"/><rect x="125.4" y="356.5" width="2.2" height="1.5" fill="#a8f4a8"/><rect x="128.9" y="354.5" width="0.9" height="6.0" fill="#28a028"/><rect x="127.9" y="356.4" width="2.8" height="2.2" fill="#000" stroke="#38c038" stroke-width="0.8"/><rect x="131.9" y="353.5" width="0.9" height="7.0" fill="#28a028"/><rect x="130.9" y="355.4" width="2.8" height="3.2" fill="#000" stroke="#38c038" stroke-width="0.8"/><rect x="136.9" y="352.1" width="0.9" height="6.8" fill="#28a028"/><rect x="135.9" y="354.0" width="2.8" height="3.0" fill="#000" stroke="#38c038" stroke-width="0.8"/><rect x="139.9" y="350.1" width="0.9" height="5.0" fill="#28a028"/><rect x="139.4" y="351.6" width="2.2" height="2.0" fill="#a8f4a8"/><rect x="143.9" y="347.3" width="0.9" height="6.8" fill="#28a028"/><rect x="142.9" y="349.2" width="2.8" height="3.0" fill="#000" stroke="#38c038" stroke-width="0.8"/><rect x="147.9" y="347.5" width="0.9" height="4.5" fill="#28a028"/><rect x="147.4" y="349.0" width="2.2" height="1.5" fill="#a8f4a8"/><rect x="151.9" y="345.3" width="0.9" height="5.9" fill="#28a028"/><rect x="150.9" y="347.2" width="2.8" height="2.1" fill="#000" stroke="#38c038" stroke-width="0.8"/><rect x="155.9" y="345.5" width="0.9" height="6.0" fill="#28a028"/><rect x="155.4" y="347.0" width="2.2" height="3.0" fill="#a8f4a8"/><rect x="159.9" y="340.5" width="0.9" height="8.8" fill="#28a028"/><rect x="158.9" y="342.4" width="2.8" height="5.0" fill="#000" stroke="#38c038" stroke-width="0.8"/><rect x="162.9" y="330.9" width="0.9" height="12.6" fill="#28a028"/><rect x="161.9" y="332.8" width="2.8" height="8.8" fill="#000" stroke="#38c038" stroke-width="0.8"/><rect x="165.9" y="329.9" width="0.9" height="12.6" fill="#28a028"/><rect x="165.4" y="331.4" width="2.2" height="9.6" fill="#a8f4a8"/><rect x="169.9" y="330.9" width="0.9" height="13.6" fill="#28a028"/><rect x="169.4" y="332.4" width="2.2" height="10.6" fill="#a8f4a8"/><rect x="173.9" y="339.0" width="0.9" height="4.0" fill="#28a028"/><rect x="173.4" y="340.5" width="2.2" height="1.0" fill="#a8f4a8"/><rect x="177.9" y="337.5" width="0.9" height="5.0" fill="#28a028"/><rect x="176.9" y="339.4" width="2.8" height="1.2" fill="#000" stroke="#38c038" stroke-width="0.8"/><rect x="181.9" y="334.5" width="0.9" height="8.0" fill="#28a028"/><rect x="180.9" y="336.4" width="2.8" height="4.2" fill="#000" stroke="#38c038" stroke-width="0.8"/><rect x="185.9" y="329.0" width="0.9" height="9.7" fill="#28a028"/><rect x="184.9" y="330.9" width="2.8" height="5.9" fill="#000" stroke="#38c038" stroke-width="0.8"/><rect x="189.9" y="328.5" width="0.9" height="4.5" fill="#28a028"/><rect x="189.4" y="330.0" width="2.2" height="1.5" fill="#a8f4a8"/><rect x="192.9" y="328.5" width="0.9" height="4.5" fill="#28a028"/><rect x="192.4" y="330.0" width="2.2" height="1.5" fill="#a8f4a8"/><rect x="195.9" y="328.0" width="0.9" height="8.8" fill="#28a028"/><rect x="194.9" y="329.9" width="2.8" height="5.0" fill="#000" stroke="#38c038" stroke-width="0.8"/><rect x="199.9" y="327.0" width="0.9" height="11.5" fill="#28a028"/><rect x="199.4" y="328.5" width="2.2" height="8.5" fill="#a8f4a8"/><rect x="203.9" y="323.5" width="0.9" height="6.0" fill="#28a028"/><rect x="202.9" y="325.4" width="2.8" height="2.2" fill="#000" stroke="#38c038" stroke-width="0.8"/><rect x="207.9" y="319.3" width="0.9" height="6.9" fill="#28a028"/><rect x="206.9" y="321.2" width="2.8" height="3.1" fill="#000" stroke="#38c038" stroke-width="0.8"/><rect x="211.9" y="317.5" width="0.9" height="7.0" fill="#28a028"/><rect x="210.9" y="319.4" width="2.8" height="3.2" fill="#000" stroke="#38c038" stroke-width="0.8"/><rect x="215.9" y="306.8" width="0.9" height="13.7" fill="#28a028"/><rect x="214.9" y="308.7" width="2.8" height="9.9" fill="#000" stroke="#38c038" stroke-width="0.8"/><rect x="219.9" y="306.5" width="0.9" height="4.5" fill="#28a028"/><rect x="219.4" y="308.0" width="2.2" height="1.5" fill="#a8f4a8"/><rect x="222.9" y="304.5" width="0.9" height="7.0" fill="#28a028"/><rect x="221.9" y="306.4" width="2.8" height="3.2" fill="#000" stroke="#38c038" stroke-width="0.8"/><rect x="225.9" y="299.1" width="0.9" height="12.6" fill="#28a028"/><rect x="224.9" y="301.0" width="2.8" height="8.8" fill="#000" stroke="#38c038" stroke-width="0.8"/><rect x="228.9" y="299.3" width="0.9" height="7.7" fill="#28a028"/><rect x="228.4" y="300.8" width="2.2" height="4.7" fill="#a8f4a8"/><rect x="233.9" y="302.8" width="0.9" height="8.9" fill="#28a028"/><rect x="233.4" y="304.3" width="2.2" height="5.9" fill="#a8f4a8"/><rect x="237.9" y="304.0" width="0.9" height="8.9" fill="#28a028"/><rect x="236.9" y="305.9" width="2.8" height="5.1" fill="#000" stroke="#38c038" stroke-width="0.8"/><rect x="240.9" y="303.5" width="0.9" height="5.0" fill="#28a028"/><rect x="240.4" y="305.0" width="2.2" height="2.0" fill="#a8f4a8"/><rect x="244.9" y="303.5" width="0.9" height="5.0" fill="#28a028"/><rect x="243.9" y="305.4" width="2.8" height="1.2" fill="#000" stroke="#38c038" stroke-width="0.8"/><rect x="249.9" y="303.5" width="0.9" height="6.0" fill="#28a028"/><rect x="248.9" y="305.4" width="2.8" height="2.2" fill="#000" stroke="#38c038" stroke-width="0.8"/><rect x="252.9" y="302.5" width="0.9" height="5.0" fill="#28a028"/><rect x="252.4" y="304.0" width="2.2" height="2.0" fill="#a8f4a8"/><rect x="256.9" y="304.0" width="0.9" height="13.5" fill="#28a028"/><rect x="256.4" y="305.5" width="2.2" height="10.5" fill="#a8f4a8"/><rect x="259.9" y="312.2" width="0.9" height="7.7" fill="#28a028"/><rect x="258.9" y="314.1" width="2.8" height="3.9" fill="#000" stroke="#38c038" stroke-width="0.8"/><rect x="263.9" y="315.8" width="0.9" height="14.7" fill="#28a028"/><rect x="263.4" y="317.3" width="2.2" height="11.7" fill="#a8f4a8"/><rect x="267.9" y="316.9" width="0.9" height="12.5" fill="#28a028"/><rect x="266.9" y="318.8" width="2.8" height="8.7" fill="#000" stroke="#38c038" stroke-width="0.8"/><rect x="270.9" y="311.5" width="0.9" height="10.0" fill="#28a028"/><rect x="269.9" y="313.4" width="2.8" height="6.2" fill="#000" stroke="#38c038" stroke-width="0.8"/><rect x="274.9" y="311.5" width="0.9" height="5.0" fill="#28a028"/><rect x="274.4" y="313.0" width="2.2" height="2.0" fill="#a8f4a8"/><rect x="278.9" y="310.5" width="0.9" height="4.5" fill="#28a028"/><rect x="278.4" y="312.0" width="2.2" height="1.5" fill="#a8f4a8"/><rect x="281.9" y="308.5" width="0.9" height="6.0" fill="#28a028"/><rect x="280.9" y="310.4" width="2.8" height="2.2" fill="#000" stroke="#38c038" stroke-width="0.8"/><rect x="286.9" y="308.5" width="0.9" height="6.0" fill="#28a028"/><rect x="286.4" y="310.0" width="2.2" height="3.0" fill="#a8f4a8"/><rect x="290.9" y="310.5" width="0.9" height="5.0" fill="#28a028"/><rect x="290.4" y="312.0" width="2.2" height="2.0" fill="#a8f4a8"/><rect x="293.9" y="306.5" width="0.9" height="8.0" fill="#28a028"/><rect x="292.9" y="308.4" width="2.8" height="4.2" fill="#000" stroke="#38c038" stroke-width="0.8"/><rect x="297.9" y="306.5" width="0.9" height="5.0" fill="#28a028"/><rect x="297.4" y="308.0" width="2.2" height="2.0" fill="#a8f4a8"/><rect x="300.9" y="307.5" width="0.9" height="5.0" fill="#28a028"/><rect x="299.9" y="309.4" width="2.8" height="1.2" fill="#000" stroke="#38c038" stroke-width="0.8"/><rect x="304.9" y="308.7" width="0.9" height="10.1" fill="#28a028"/><rect x="304.4" y="310.2" width="2.2" height="7.1" fill="#a8f4a8"/><rect x="307.9" y="312.5" width="0.9" height="7.0" fill="#28a028"/><rect x="307.4" y="314.0" width="2.2" height="4.0" fill="#a8f4a8"/><rect x="311.9" y="312.5" width="0.9" height="5.0" fill="#28a028"/><rect x="310.9" y="314.4" width="2.8" height="1.2" fill="#000" stroke="#38c038" stroke-width="0.8"/><rect x="316.9" y="311.5" width="0.9" height="8.0" fill="#28a028"/><rect x="315.9" y="313.4" width="2.8" height="4.2" fill="#000" stroke="#38c038" stroke-width="0.8"/><rect x="319.9" y="313.5" width="0.9" height="6.0" fill="#28a028"/><rect x="319.4" y="315.0" width="2.2" height="3.0" fill="#a8f4a8"/><rect x="323.9" y="309.5" width="0.9" height="8.0" fill="#28a028"/><rect x="322.9" y="311.4" width="2.8" height="4.2" fill="#000" stroke="#38c038" stroke-width="0.8"/><rect x="326.9" y="308.5" width="0.9" height="6.0" fill="#28a028"/><rect x="325.9" y="310.4" width="2.8" height="2.2" fill="#000" stroke="#38c038" stroke-width="0.8"/><rect x="330.9" y="306.5" width="0.9" height="6.0" fill="#28a028"/><rect x="329.9" y="308.4" width="2.8" height="2.2" fill="#000" stroke="#38c038" stroke-width="0.8"/><rect x="333.9" y="299.3" width="0.9" height="12.4" fill="#28a028"/><rect x="332.9" y="301.2" width="2.8" height="8.6" fill="#000" stroke="#38c038" stroke-width="0.8"/><rect x="337.9" y="263.9" width="0.9" height="38.4" fill="#28a028"/><rect x="336.9" y="265.8" width="2.8" height="34.6" fill="#000" stroke="#38c038" stroke-width="0.8"/><rect x="339.9" y="256.8" width="0.9" height="11.3" fill="#28a028"/><rect x="338.9" y="258.7" width="2.8" height="7.5" fill="#000" stroke="#38c038" stroke-width="0.8"/><rect x="342.9" y="247.4" width="0.9" height="20.7" fill="#28a028"/><rect x="341.9" y="249.3" width="2.8" height="16.9" fill="#000" stroke="#38c038" stroke-width="0.8"/><rect x="346.9" y="241.5" width="0.9" height="17.0" fill="#28a028"/><rect x="345.9" y="243.4" width="2.8" height="13.2" fill="#000" stroke="#38c038" stroke-width="0.8"/><rect x="266.5" y="319.5" width="3.5" height="3.5" fill="none" stroke="#d02020" stroke-width="0.6"/><text x="270.5" y="327" font-size="4.8" fill="#e02020" stroke="#e02020" stroke-width="0.12" text-anchor="start" letter-spacing="-0.25" font-weight="normal" font-family="Liberation Sans">buy</text><rect x="103.7" y="230" width="370.3" height="154" fill="none" stroke="#c0c0c0" stroke-width="0.8"/><text x="104.8" y="235.8" font-size="5.4" fill="#f0f0f0" stroke="#f0f0f0" stroke-width="0.15" letter-spacing="-0.142" font-family="Liberation Sans">USDJPY, H1, cell: 30, scale: 100%</text><text x="106" y="318" font-size="5.2" fill="#e0e0e0" stroke="#e0e0e0" stroke-width="0.12" text-anchor="start" letter-spacing="-0.25" font-weight="normal" font-family="Liberation Sans">#2 buy</text><rect x="474" y="234.7" width="1.5" height="0.8" fill="#d0d0d0"/><text x="476.8" y="237.1" font-size="5.8" fill="#e8e8e8" stroke="#e8e8e8" stroke-width="0.2" textLength="12.65" lengthAdjust="spacingAndGlyphs" font-family="Liberation Sans">83.40</text><rect x="474" y="251.9" width="1.5" height="0.8" fill="#d0d0d0"/><text x="476.8" y="254.3" font-size="5.8" fill="#e8e8e8" stroke="#e8e8e8" stroke-width="0.2" textLength="12.65" lengthAdjust="spacingAndGlyphs" font-family="Liberation Sans">83.10</text><rect x="474" y="269.5" width="1.5" height="0.8" fill="#d0d0d0"/><text x="476.8" y="271.9" font-size="5.8" fill="#e8e8e8" stroke="#e8e8e8" stroke-width="0.2" textLength="12.65" lengthAdjust="spacingAndGlyphs" font-family="Liberation Sans">82.80</text><rect x="474" y="286.20000000000005" width="1.5" height="0.8" fill="#d0d0d0"/><text x="476.8" y="288.6" font-size="5.8" fill="#e8e8e8" stroke="#e8e8e8" stroke-width="0.2" textLength="12.65" lengthAdjust="spacingAndGlyphs" font-family="Liberation Sans">82.50</text><rect x="474" y="302.90000000000003" width="1.5" height="0.8" fill="#d0d0d0"/><text x="476.8" y="305.3" font-size="5.8" fill="#e8e8e8" stroke="#e8e8e8" stroke-width="0.2" textLength="12.65" lengthAdjust="spacingAndGlyphs" font-family="Liberation Sans">82.20</text><rect x="474" y="319.6" width="1.5" height="0.8" fill="#d0d0d0"/><text x="476.8" y="322.0" font-size="5.8" fill="#e8e8e8" stroke="#e8e8e8" stroke-width="0.2" textLength="12.65" lengthAdjust="spacingAndGlyphs" font-family="Liberation Sans">81.90</text><rect x="474" y="336.40000000000003" width="1.5" height="0.8" fill="#d0d0d0"/><text x="476.8" y="338.8" font-size="5.8" fill="#e8e8e8" stroke="#e8e8e8" stroke-width="0.2" textLength="12.65" lengthAdjust="spacingAndGlyphs" font-family="Liberation Sans">81.60</text><rect x="474" y="353.1" width="1.5" height="0.8" fill="#d0d0d0"/><text x="476.8" y="355.5" font-size="5.8" fill="#e8e8e8" stroke="#e8e8e8" stroke-width="0.2" textLength="12.65" lengthAdjust="spacingAndGlyphs" font-family="Liberation Sans">81.30</text><rect x="474" y="369.90000000000003" width="1.5" height="0.8" fill="#d0d0d0"/><text x="476.8" y="372.3" font-size="5.8" fill="#e8e8e8" stroke="#e8e8e8" stroke-width="0.2" textLength="12.65" lengthAdjust="spacingAndGlyphs" font-family="Liberation Sans">81.00</text><rect x="475.5" y="240.2" width="15" height="6.6" fill="#ffffff"/><text x="476.8" y="245.6" font-size="5.8" fill="#000000" stroke="#000000" stroke-width="0.2" textLength="12.65" lengthAdjust="spacingAndGlyphs" font-family="Liberation Sans">83.25</text><line x1="106.4" y1="384" x2="106.4" y2="385.5" stroke="#d0d0d0" stroke-width="0.7"/><text x="106.0" y="389.5" font-size="4.6" fill="#e0e0e0" stroke="#e0e0e0" stroke-width="0.2" letter-spacing="-0.069" font-family="Liberation Sans">2 Jan 2011</text><line x1="136" y1="384" x2="136" y2="385.5" stroke="#d0d0d0" stroke-width="0.7"/><text x="135.60000000000002" y="389.5" font-size="4.6" fill="#e0e0e0" stroke="#e0e0e0" stroke-width="0.2" letter-spacing="-0.094" font-family="Liberation Sans">3 Jan 07:00</text><line x1="166.5" y1="384" x2="166.5" y2="385.5" stroke="#d0d0d0" stroke-width="0.7"/><text x="166.10000000000002" y="389.5" font-size="4.6" fill="#e0e0e0" stroke="#e0e0e0" stroke-width="0.2" letter-spacing="-0.094" font-family="Liberation Sans">3 Jan 15:00</text><line x1="196.8" y1="384" x2="196.8" y2="385.5" stroke="#d0d0d0" stroke-width="0.7"/><text x="196.40000000000003" y="389.5" font-size="4.6" fill="#e0e0e0" stroke="#e0e0e0" stroke-width="0.2" letter-spacing="-0.094" font-family="Liberation Sans">3 Jan 23:00</text><line x1="226.6" y1="384" x2="226.6" y2="385.5" stroke="#d0d0d0" stroke-width="0.7"/><text x="226.20000000000002" y="389.5" font-size="4.6" fill="#e0e0e0" stroke="#e0e0e0" stroke-width="0.2" letter-spacing="-0.094" font-family="Liberation Sans">4 Jan 07:00</text><line x1="256" y1="384" x2="256" y2="385.5" stroke="#d0d0d0" stroke-width="0.7"/><text x="255.60000000000002" y="389.5" font-size="4.6" fill="#e0e0e0" stroke="#e0e0e0" stroke-width="0.2" letter-spacing="-0.094" font-family="Liberation Sans">4 Jan 15:00</text><line x1="286.4" y1="384" x2="286.4" y2="385.5" stroke="#d0d0d0" stroke-width="0.7"/><text x="286.0" y="389.5" font-size="4.6" fill="#e0e0e0" stroke="#e0e0e0" stroke-width="0.2" letter-spacing="-0.094" font-family="Liberation Sans">4 Jan 23:00</text><line x1="316" y1="384" x2="316" y2="385.5" stroke="#d0d0d0" stroke-width="0.7"/><text x="315.6" y="389.5" font-size="4.6" fill="#e0e0e0" stroke="#e0e0e0" stroke-width="0.2" letter-spacing="-0.094" font-family="Liberation Sans">5 Jan 07:00</text><line x1="346" y1="384" x2="346" y2="385.5" stroke="#d0d0d0" stroke-width="0.7"/><text x="345.6" y="389.5" font-size="4.6" fill="#e0e0e0" stroke="#e0e0e0" stroke-width="0.2" letter-spacing="-0.094" font-family="Liberation Sans">5 Jan 15:00</text></svg><svg style="left:502px;top:227px" width="393" height="166" viewBox="502 227 393 166"><line x1="504.5" y1="238.5" x2="871.2" y2="238.5" stroke="#121219" stroke-width="1"/><rect x="871.2" y="238.1" width="1.5" height="0.8" fill="#d0d0d0"/><text x="873.3" y="241.0" font-size="5.8" fill="#e8e8e8" stroke="#e8e8e8" stroke-width="0.2" textLength="12.65" lengthAdjust="spacingAndGlyphs" font-family="Liberation Sans">13000</text><line x1="504.5" y1="252.5" x2="871.2" y2="252.5" stroke="#121219" stroke-width="1"/><rect x="871.2" y="251.79999999999998" width="1.5" height="0.8" fill="#d0d0d0"/><text x="873.3" y="254.7" font-size="5.8" fill="#e8e8e8" stroke="#e8e8e8" stroke-width="0.2" textLength="12.65" lengthAdjust="spacingAndGlyphs" font-family="Liberation Sans">11700</text><line x1="504.5" y1="265.5" x2="871.2" y2="265.5" stroke="#121219" stroke-width="1"/><rect x="871.2" y="265.40000000000003" width="1.5" height="0.8" fill="#d0d0d0"/><text x="873.3" y="268.3" font-size="5.8" fill="#e8e8e8" stroke="#e8e8e8" stroke-width="0.2" textLength="12.65" lengthAdjust="spacingAndGlyphs" font-family="Liberation Sans">10400</text><line x1="504.5" y1="279.5" x2="871.2" y2="279.5" stroke="#121219" stroke-width="1"/><rect x="871.2" y="279.0" width="1.5" height="0.8" fill="#d0d0d0"/><text x="873.3" y="281.9" font-size="5.8" fill="#e8e8e8" stroke="#e8e8e8" stroke-width="0.2" textLength="10.20" lengthAdjust="spacingAndGlyphs" font-family="Liberation Sans">9100</text><line x1="504.5" y1="293.5" x2="871.2" y2="293.5" stroke="#121219" stroke-width="1"/><rect x="871.2" y="292.6" width="1.5" height="0.8" fill="#d0d0d0"/><text x="873.3" y="295.5" font-size="5.8" fill="#e8e8e8" stroke="#e8e8e8" stroke-width="0.2" textLength="10.20" lengthAdjust="spacingAndGlyphs" font-family="Liberation Sans">7800</text><line x1="504.5" y1="306.5" x2="871.2" y2="306.5" stroke="#121219" stroke-width="1"/><rect x="871.2" y="306.20000000000005" width="1.5" height="0.8" fill="#d0d0d0"/><text x="873.3" y="309.1" font-size="5.8" fill="#e8e8e8" stroke="#e8e8e8" stroke-width="0.2" textLength="10.20" lengthAdjust="spacingAndGlyphs" font-family="Liberation Sans">6500</text><line x1="504.5" y1="320.5" x2="871.2" y2="320.5" stroke="#121219" stroke-width="1"/><rect x="871.2" y="319.90000000000003" width="1.5" height="0.8" fill="#d0d0d0"/><text x="873.3" y="322.8" font-size="5.8" fill="#e8e8e8" stroke="#e8e8e8" stroke-width="0.2" textLength="10.20" lengthAdjust="spacingAndGlyphs" font-family="Liberation Sans">5200</text><line x1="504.5" y1="334.5" x2="871.2" y2="334.5" stroke="#121219" stroke-width="1"/><rect x="871.2" y="333.6" width="1.5" height="0.8" fill="#d0d0d0"/><text x="873.3" y="336.5" font-size="5.8" fill="#e8e8e8" stroke="#e8e8e8" stroke-width="0.2" textLength="10.20" lengthAdjust="spacingAndGlyphs" font-family="Liberation Sans">3900</text><line x1="504.5" y1="347.5" x2="871.2" y2="347.5" stroke="#121219" stroke-width="1"/><rect x="871.2" y="347.20000000000005" width="1.5" height="0.8" fill="#d0d0d0"/><text x="873.3" y="350.1" font-size="5.8" fill="#e8e8e8" stroke="#e8e8e8" stroke-width="0.2" textLength="10.20" lengthAdjust="spacingAndGlyphs" font-family="Liberation Sans">2600</text><line x1="504.5" y1="361.5" x2="871.2" y2="361.5" stroke="#121219" stroke-width="1"/><rect x="871.2" y="360.8" width="1.5" height="0.8" fill="#d0d0d0"/><text x="873.3" y="363.7" font-size="5.8" fill="#e8e8e8" stroke="#e8e8e8" stroke-width="0.2" textLength="10.20" lengthAdjust="spacingAndGlyphs" font-family="Liberation Sans">1300</text><line x1="504.5" y1="374.5" x2="871.2" y2="374.5" stroke="#121219" stroke-width="1"/><rect x="871.2" y="374.40000000000003" width="1.5" height="0.8" fill="#d0d0d0"/><text x="873.5" y="377.3" font-size="5.8" fill="#e8e8e8" stroke="#e8e8e8" stroke-width="0.2" font-family="Liberation Sans">0</text><line x1="504.5" y1="269.5" x2="625" y2="269.5" stroke="#1a8a1a" stroke-width="1"/><path d="M584.0 267.7 L585.3 267.4 L586.6 266.7 L587.9 268.7 L589.2 266.3 L590.5 267.6 L591.8 268.7 L593.1 266.4 L594.4 267.6 L595.7 267.8 L597.0 266.1 L598.3 267.0 L599.6 267.9 L600.9 267.2 L602.2 267.9 L603.5 266.3 L604.8 266.4 L606.1 266.0 L607.4 267.1 L608.7 268.2 L610.0 267.3 L611.3 267.7 L612.6 266.6 L613.9 267.6 L615.2 265.7 L616.5 266.2 L617.8 267.3 L619.1 267.4 L620.4 266.5 L621.0 265.0 L622.0 262.0 L623.0 252.0 L624.2 243.0 L625.5 239.5" fill="none" stroke="#2a2ab8" stroke-width="0.9"/><path d="M587.5 374.4 V353.5 H626.2" fill="none" stroke="#b8b8b8" stroke-width="0.8"/><line x1="504.5" y1="374.6" x2="626" y2="374.6" stroke="#8a1a20" stroke-width="1"/><path d="M588.0 373.9 L589.2 373.8 L590.4 374.3 L591.6 372.9 L592.8 372.7 L594.0 372.5 L595.2 371.3 L596.4 371.8 L597.6 371.8 L598.8 372.0 L600.0 370.1 L601.2 370.4 L602.4 369.8 L603.6 371.4 L604.8 371.0 L606.0 369.4 L607.2 371.7 L608.4 371.6 L609.6 370.9 L610.8 370.9 L612.0 370.0 L613.2 369.8 L614.4 371.2 L615.6 370.3 L616.8 370.8 L618.0 371.2 L619.2 371.0 L620.4 372.4 L621.6 372.6 L622.8 373.9 L624.0 373.5 L625.2 374.1" fill="none" stroke="#7a1820" stroke-width="0.8"/><rect x="504.4" y="229.3" width="366.8" height="153.7" fill="none" stroke="#c0c0c0" stroke-width="0.8"/><rect x="506.7" y="231.7" width="5.3" height="4.6" fill="#20d020" stroke="#e0e0e0" stroke-width="0.6"/><text x="513.0999999999999" y="236" font-size="5.8" fill="#e8e8e8" stroke="#e8e8e8" stroke-width="0.15" textLength="18.40" lengthAdjust="spacingAndGlyphs" font-family="Liberation Sans">Balance</text><rect x="534" y="231.7" width="5.3" height="4.6" fill="#2828f0" stroke="#e0e0e0" stroke-width="0.6"/><text x="540.5" y="236" font-size="5.8" fill="#e8e8e8" stroke="#e8e8e8" stroke-width="0.15" textLength="14.40" lengthAdjust="spacingAndGlyphs" font-family="Liberation Sans">Equity</text><rect x="557.3" y="231.7" width="5.3" height="4.6" fill="#a0a0a0" stroke="#e0e0e0" stroke-width="0.6"/><text x="563.8" y="236" font-size="5.8" fill="#e8e8e8" stroke="#e8e8e8" stroke-width="0.15" textLength="15.10" lengthAdjust="spacingAndGlyphs" font-family="Liberation Sans">Margin</text><rect x="581.3" y="231.7" width="5.3" height="4.6" fill="#c02020" stroke="#e0e0e0" stroke-width="0.6"/><text x="587.8" y="236" font-size="5.8" fill="#e8e8e8" stroke="#e8e8e8" stroke-width="0.15" letter-spacing="-0.200" font-family="Liberation Sans">Drawdown</text></svg>
<div style="position:absolute;left:96px;top:398px;width:804px;height:10px;background:#dcdcdc;"></div>
<div style="position:absolute;left:96px;top:398px;width:804px;height:0.6px;background:#c8c8c8;"></div>
<div class="t" style="left:103.70px;top:399.41px;font-size:5.8px;line-height:6.96px;letter-spacing:-0.1px;transform:scaleX(0.900);transform-origin:0 0;color:#303030;font-weight:bold;">AUDUSD, H1</div>
<div style="position:absolute;left:138px;top:400px;width:1px;height:7px;background:#b8b8b8;"></div>
<div class="t" style="left:140.10px;top:399.41px;font-size:5.8px;line-height:6.96px;letter-spacing:-0.1px;transform:scaleX(0.932);transform-origin:0 0;color:#303030;font-weight:bold;">EURUSD, M15</div>
<div style="position:absolute;left:178px;top:398px;width:34px;height:10px;background:#ffffff;box-shadow:inset 1px 0 0 #909090,inset -1px 0 0 #909090,inset 0 -1px 0 #909090;"></div>
<div class="t" style="left:179.90px;top:399.41px;font-size:5.8px;line-height:6.96px;letter-spacing:-0.1px;transform:scaleX(0.948);transform-origin:0 0;color:#202020;">USDJPY, H1</div>
<div class="t" style="left:215.00px;top:399.41px;font-size:5.8px;line-height:6.96px;letter-spacing:-0.1px;transform:scaleX(0.915);transform-origin:0 0;color:#303030;font-weight:bold;">Profit</div>
<div style="position:absolute;left:774px;top:399px;width:93.5px;height:8px;background:#f2f2f2;box-shadow:inset 1px 0 0 #c8c8c8;"></div>
<div style="position:absolute;left:868.0px;top:399.5px;width:7px;height:7.5px;background:#c4c4c4;"></div>
<div style="position:absolute;left:875.8px;top:399.5px;width:7px;height:7.5px;background:#c4c4c4;"></div>
<div style="position:absolute;left:883.6px;top:399.5px;width:7px;height:7.5px;background:#c4c4c4;"></div>
<div style="position:absolute;left:891.4px;top:399.5px;width:7px;height:7.5px;background:#c4c4c4;"></div>
<svg style="left:770px;top:398px" width="130" height="10"><path d="M9 3 L7.5 5 L9 7 M93 3 L94.5 5 L93 7" stroke="#c0c0c0" stroke-width="0.8" fill="none"/><path d="M100.3 3 V7 M104 3 L101 5 L104 7Z M111.5 3 L108.5 5 L111.5 7Z M116.5 3 L119.5 5 L116.5 7Z M124 3 L127 5 L124 7Z M127.7 3 V7" stroke="#686868" stroke-width="0.6" fill="#686868"/></svg>
<div style="position:absolute;left:0px;top:408px;width:900px;height:37px;background:#ffffff;"></div>
<div style="position:absolute;left:0px;top:407.5px;width:900px;height:2px;background:linear-gradient(#e6e6e6,#d8d8d8);"></div>
<div style="position:absolute;left:8px;top:417px;width:892px;height:8.5px;background:#ececec;"></div>
<div style="position:absolute;left:8px;top:425px;width:892px;height:9px;background:#d4d4d4;"></div>
<div style="position:absolute;left:0px;top:416px;width:6.5px;height:39.6px;background:linear-gradient(#6a88c0,#2a4890 40%,#1a3070);"></div>
<div class="t" style="left:-12.3px;top:436.9px;width:30px;height:7px;transform:rotate(-90deg);will-change:auto;font-size:6.3px;line-height:7px;color:#fff;text-align:center;letter-spacing:0.05px">Terminal</div>
<div style="position:absolute;left:1px;top:411px;width:6px;height:4.5px;background:#ffffff;"></div>
<div class="t" style="left:1.30px;top:410.29px;font-size:5.5px;line-height:6.60px;letter-spacing:0.000px;color:#202020;font-weight:bold;">&#x2715;</div>
<div style="position:absolute;left:72px;top:409px;width:1px;height:16px;background:#e4e4e4;"></div>
<div style="position:absolute;left:137px;top:409px;width:1px;height:16px;background:#e4e4e4;"></div>
<div style="position:absolute;left:203px;top:409px;width:1px;height:16px;background:#e4e4e4;"></div>
<div style="position:absolute;left:269px;top:409px;width:1px;height:16px;background:#e4e4e4;"></div>
<div style="position:absolute;left:375px;top:409px;width:1px;height:16px;background:#e4e4e4;"></div>
<div style="position:absolute;left:440px;top:409px;width:1px;height:16px;background:#e4e4e4;"></div>
<div style="position:absolute;left:505px;top:409px;width:1px;height:16px;background:#e4e4e4;"></div>
<div style="position:absolute;left:570px;top:409px;width:1px;height:16px;background:#e4e4e4;"></div>
<div style="position:absolute;left:633px;top:409px;width:1px;height:16px;background:#e4e4e4;"></div>
<div style="position:absolute;left:698px;top:409px;width:1px;height:16px;background:#e4e4e4;"></div>
<div style="position:absolute;left:765px;top:409px;width:1px;height:16px;background:#e4e4e4;"></div>
<div style="position:absolute;left:831px;top:409px;width:1px;height:16px;background:#e4e4e4;"></div>
<div class="t" style="left:10.00px;top:410.02px;font-size:6px;line-height:7.20px;letter-spacing:-0.1px;transform:scaleX(0.877);transform-origin:0 0;color:#303030;">Ticket</div>
<div class="t" style="left:97.00px;top:410.21px;font-size:5.8px;line-height:6.96px;letter-spacing:-0.1px;transform:scaleX(0.849);transform-origin:0 0;color:#303030;">Symbol</div>
<div class="t" style="left:165.00px;top:410.21px;font-size:5.8px;line-height:6.96px;letter-spacing:-0.1px;transform:scaleX(0.872);transform-origin:0 0;color:#303030;">Type</div>
<div class="t" style="left:-33.35px;top:410.21px;font-size:5.8px;line-height:6.96px;letter-spacing:-0.350px;width:300px;text-align:right;color:#303030;">Lots</div>
<div class="t" style="left:73.65px;top:410.21px;font-size:5.8px;line-height:6.96px;letter-spacing:-0.350px;width:300px;text-align:right;color:#303030;">Open Time</div>
<div class="t" style="left:138.65px;top:410.21px;font-size:5.8px;line-height:6.96px;letter-spacing:-0.350px;width:300px;text-align:right;color:#303030;">Open Price</div>
<div class="t" style="left:203.65px;top:410.21px;font-size:5.8px;line-height:6.96px;letter-spacing:-0.350px;width:300px;text-align:right;color:#303030;">S/L</div>
<div class="t" style="left:268.65px;top:410.21px;font-size:5.8px;line-height:6.96px;letter-spacing:-0.350px;width:300px;text-align:right;color:#303030;">T/P</div>
<div class="t" style="left:333.65px;top:410.21px;font-size:5.8px;line-height:6.96px;letter-spacing:-0.350px;width:300px;text-align:right;color:#303030;">Market Price</div>
<div class="t" style="left:398.65px;top:410.21px;font-size:5.8px;line-height:6.96px;letter-spacing:-0.350px;width:300px;text-align:right;color:#303030;">Comm</div>
<div class="t" style="left:463.65px;top:410.21px;font-size:5.8px;line-height:6.96px;letter-spacing:-0.350px;width:300px;text-align:right;color:#303030;">Swap</div>
<div class="t" style="left:528.65px;top:410.21px;font-size:5.8px;line-height:6.96px;letter-spacing:-0.350px;width:300px;text-align:right;color:#303030;">Points</div>
<div class="t" style="left:597.65px;top:410.21px;font-size:5.8px;line-height:6.96px;letter-spacing:-0.350px;width:300px;text-align:right;color:#303030;">Profit</div>
<div class="t" style="left:-33.35px;top:418.40px;font-size:5.6px;line-height:6.72px;letter-spacing:-0.350px;width:300px;text-align:right;color:#303030;">2.00</div>
<div class="t" style="left:73.65px;top:418.40px;font-size:5.6px;line-height:6.72px;letter-spacing:-0.350px;width:300px;text-align:right;color:#303030;">2011.01.04 18:59</div>
<div class="t" style="left:138.65px;top:418.40px;font-size:5.6px;line-height:6.72px;letter-spacing:-0.350px;width:300px;text-align:right;color:#303030;">81.91</div>
<div class="t" style="left:203.65px;top:418.40px;font-size:5.6px;line-height:6.72px;letter-spacing:-0.350px;width:300px;text-align:right;color:#303030;">0.00</div>
<div class="t" style="left:268.65px;top:418.40px;font-size:5.6px;line-height:6.72px;letter-spacing:-0.350px;width:300px;text-align:right;color:#303030;">0.00</div>
<div class="t" style="left:333.65px;top:418.40px;font-size:5.6px;line-height:6.72px;letter-spacing:-0.350px;width:300px;text-align:right;color:#303030;">83.25</div>
<div class="t" style="left:398.65px;top:418.40px;font-size:5.6px;line-height:6.72px;letter-spacing:-0.350px;width:300px;text-align:right;color:#303030;">0.00</div>
<div class="t" style="left:463.65px;top:418.40px;font-size:5.6px;line-height:6.72px;letter-spacing:-0.350px;width:300px;text-align:right;color:#303030;">-8.58</div>
<div class="t" style="left:528.65px;top:418.40px;font-size:5.6px;line-height:6.72px;letter-spacing:-0.350px;width:300px;text-align:right;color:#303030;">134</div>
<div class="t" style="left:597.65px;top:418.40px;font-size:5.6px;line-height:6.72px;letter-spacing:-0.350px;width:300px;text-align:right;color:#303030;">3212.64</div>
<svg style="left:9.5px;top:417.8px" width="7" height="8"><path d="M0.5 0.5 H4.5 L6.3 2.3 V7.3 H0.5Z" fill="#f4fff8" stroke="#70c090" stroke-width="0.7"/><circle cx="3.3" cy="4.3" r="1.9" fill="#a0e0b0" stroke="#209040" stroke-width="0.8"/></svg>
<div class="t" style="left:19.00px;top:418.02px;font-size:6px;line-height:7.20px;letter-spacing:0.000px;color:#202020;">2</div>
<div class="t" style="left:-44.70px;top:418.40px;font-size:5.6px;line-height:6.72px;letter-spacing:-0.300px;width:300px;text-align:center;color:#303030;">usdjpy</div>
<div class="t" style="left:20.70px;top:418.40px;font-size:5.6px;line-height:6.72px;letter-spacing:-0.300px;width:300px;text-align:center;color:#303030;">buy</div>
<div class="t" style="left:10.70px;top:426.49px;font-size:5.5px;line-height:6.60px;letter-spacing:-0.178px;color:#101010;font-weight:bold;">Balance: 10000.00 Equity: 13212.64 Margin: 2000.00 Free margin: 11212.64 Margin level: 660.63%</div>
<div class="t" style="left:597.65px;top:426.49px;font-size:5.5px;line-height:6.60px;letter-spacing:-0.350px;width:300px;text-align:right;color:#101010;font-weight:bold;">3212.64</div>
<div style="position:absolute;left:8px;top:445px;width:892px;height:1px;background:#707070;"></div>
<div style="position:absolute;left:8px;top:446px;width:892px;height:10px;background:#d4d4d4;"></div>
<div style="position:absolute;left:13px;top:445px;width:61px;height:10px;background:#ffffff;box-shadow:inset 1px 0 0 #808080,inset -1px 0 0 #808080,inset 0 -1px 0 #808080;"></div>
<div class="t" style="left:16.40px;top:446.65px;font-size:6.5px;line-height:7.80px;letter-spacing:-0.1px;transform:scaleX(0.939);transform-origin:0 0;color:#101010;">Open Positions&nbsp;&nbsp;[ 1 ]</div>
<div class="t" style="left:77.50px;top:446.65px;font-size:6.5px;line-height:7.80px;letter-spacing:-0.1px;transform:scaleX(0.957);transform-origin:0 0;color:#202020;">Pending Orders&nbsp;&nbsp;[ 0 ]</div>
<div style="position:absolute;left:136px;top:447px;width:1px;height:7px;background:#a0a0a0;"></div>
<div class="t" style="left:140.70px;top:446.65px;font-size:6.5px;line-height:7.80px;letter-spacing:-0.1px;transform:scaleX(0.929);transform-origin:0 0;color:#202020;">Account History</div>
<div style="position:absolute;left:185px;top:447px;width:1px;height:7px;background:#a0a0a0;"></div>
<div class="t" style="left:189.00px;top:446.65px;font-size:6.5px;line-height:7.80px;letter-spacing:-0.1px;transform:scaleX(0.903);transform-origin:0 0;color:#202020;">Journal</div>
<div style="position:absolute;left:211px;top:447px;width:1px;height:7px;background:#a0a0a0;"></div>
<div style="position:absolute;left:0px;top:456px;width:900px;height:11px;background:#f0f0f0;"></div>
<div style="position:absolute;left:0px;top:456px;width:900px;height:1px;background:#f8f8f8;"></div>
<div style="position:absolute;left:0px;top:465.3px;width:900px;height:1px;background:#dadada;"></div>
<div style="position:absolute;left:596px;top:456.7px;width:75.5px;height:10.3px;box-shadow:inset 1px 1px 0 #d0d0d0,inset -1px 0 0 #e4e4e4;"></div>
<div class="t" style="left:600.80px;top:456.84px;font-size:6.3px;line-height:7.56px;letter-spacing:-0.175px;color:#101010;font-weight:bold;">2011.01.05 16:00 (Wed)</div>
<div style="position:absolute;left:672.7px;top:456.7px;width:46.59999999999991px;height:10.3px;box-shadow:inset 1px 1px 0 #d0d0d0,inset -1px 0 0 #e4e4e4;"></div>
<div style="position:absolute;left:721.7px;top:456.7px;width:27.59999999999991px;height:10.3px;box-shadow:inset 1px 1px 0 #d0d0d0,inset -1px 0 0 #e4e4e4;"></div>
<div style="position:absolute;left:751.7px;top:456.7px;width:27.59999999999991px;height:10.3px;box-shadow:inset 1px 1px 0 #d0d0d0,inset -1px 0 0 #e4e4e4;"></div>
<div style="position:absolute;left:781.7px;top:456.7px;width:27.59999999999991px;height:10.3px;box-shadow:inset 1px 1px 0 #d0d0d0,inset -1px 0 0 #e4e4e4;"></div>
<div style="position:absolute;left:811.7px;top:456.7px;width:27.59999999999991px;height:10.3px;box-shadow:inset 1px 1px 0 #d0d0d0,inset -1px 0 0 #e4e4e4;"></div>
<div style="position:absolute;left:841.7px;top:456.7px;width:27.59999999999991px;height:10.3px;box-shadow:inset 1px 1px 0 #d0d0d0,inset -1px 0 0 #e4e4e4;"></div>
<div style="position:absolute;left:871.7px;top:456.7px;width:27.59999999999991px;height:10.3px;box-shadow:inset 1px 1px 0 #d0d0d0,inset -1px 0 0 #e4e4e4;"></div>
</body></html>
